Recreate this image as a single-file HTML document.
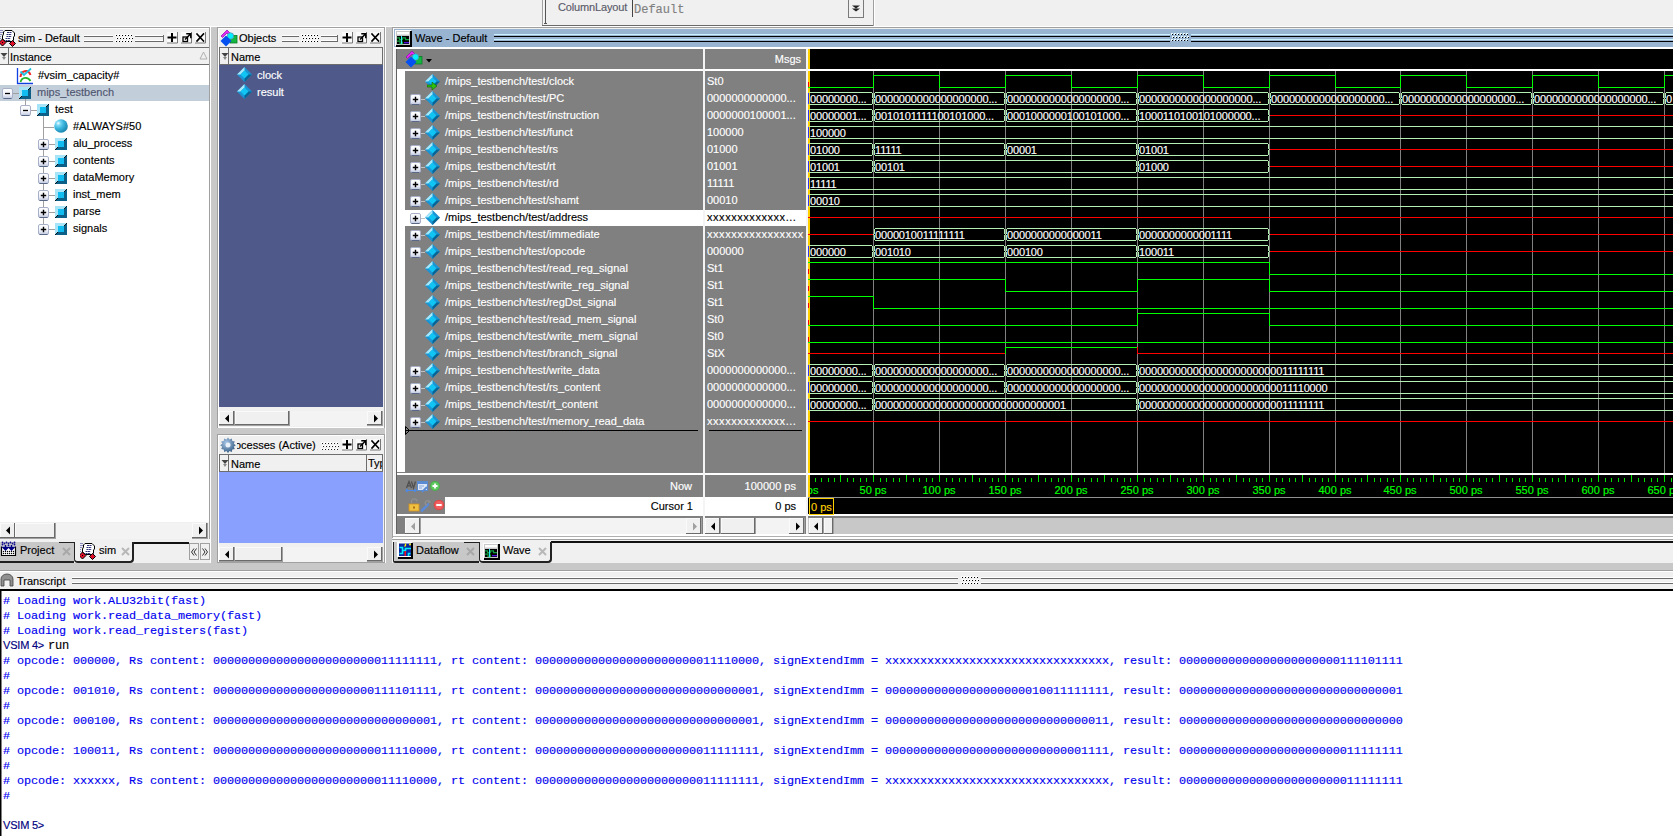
<!DOCTYPE html>
<html><head><meta charset="utf-8"><style>
html,body{margin:0;padding:0;}
body{width:1673px;height:836px;position:relative;overflow:hidden;background:#f0f0f0;font-family:"Liberation Sans", sans-serif;}
.a{position:absolute;}
.t{position:absolute;white-space:pre;line-height:14px;font-family:"Liberation Sans", sans-serif;-webkit-text-stroke:0.15px currentColor;}
</style></head><body>
<div class="a" style="left:0px;top:0px;width:1673px;height:27px;background:#f0f0f0;"></div>
<div class="a" style="left:542px;top:0px;width:1px;height:25px;background:#a0a0a0;"></div>
<div class="a" style="left:543px;top:0px;width:1px;height:25px;background:#f8f8f8;"></div>
<div class="a" style="left:542px;top:25px;width:332px;height:1px;background:#6a6a6a;"></div>
<div class="a" style="left:542px;top:26px;width:332px;height:1px;background:#fff;"></div>
<div class="a" style="left:873px;top:0px;width:1px;height:26px;background:#a0a0a0;"></div>
<div class="a" style="left:874px;top:0px;width:1px;height:27px;background:#fff;"></div>
<div class="a" style="left:545px;top:0px;width:1px;height:24px;background:#555;"></div>
<div class="a" style="left:544px;top:23px;width:3px;height:1px;background:#555;"></div>
<div class="t" style="left:558px;top:0px;color:#5a5a6a;font-size:11px;font-family:'Liberation Sans', sans-serif;letter-spacing:-0.15px;">ColumnLayout</div>
<div class="a" style="left:632px;top:0px;width:1px;height:17px;background:#444;"></div>
<div class="t" style="left:634px;top:3px;color:#808080;font-size:12px;font-family:'Liberation Mono', monospace;">Default</div>
<div class="a" style="left:848px;top:0px;width:16px;height:18px;background:#f0f0f0;border:1px solid #7a7a7a;border-top:none;box-sizing:border-box;"></div>
<svg class="a" style="left:851px;top:4px" width="10" height="10" viewBox="0 0 10 10"><path d="M1 1.5h8l-4 3z M1 4.5h8l-4 3z" fill="#222"/></svg>
<div class="a" style="left:0px;top:26px;width:1673px;height:1px;background:#fff;"></div>
<div class="a" style="left:0px;top:27px;width:1673px;height:1px;background:#a0a0a0;"></div>
<div class="a" style="left:0px;top:28px;width:210px;height:535px;background:#f0f0f0;"></div>
<div class="a" style="left:209px;top:27px;width:1px;height:512px;background:#a0a0a0;"></div>
<div class="a" style="left:0px;top:28px;width:209px;height:1px;background:#fff;"></div>
<svg class="a" style="left:0px;top:28px" width="17" height="19" viewBox="0 0 17 19"><path d="M5 2.5H12L14.5 5V8L13.5 9V12L12.5 13.5H5.5L2.5 11V8L3.5 6V4Z" fill="#fff" stroke="#000"/><path d="M7 4.5h5M6.5 6.5h5M6.5 8.5h5M5.5 10.5h5M5.5 12.5h5" stroke="#303078" stroke-dasharray="2 0.4"/><path d="M0 2.5h3M0 4.5h3M0 6.5h2M0 8.5h1M0 10.5h1" stroke="#8888c0"/><path d="M2.5 11L6 14.5L2.5 18L-1 14.5Z" fill="#e0102a" stroke="#000"/><rect x="2" y="14" width="1" height="1" fill="#000"/><path d="M12.5 12.5L15.5 15.5L12.5 18.5L9.5 15.5Z" fill="#e0102a" stroke="#000"/></svg>
<div class="t" style="left:18px;top:31px;color:#000;font-size:11px;font-family:'Liberation Sans', sans-serif;">sim - Default</div>
<div class="a" style="left:84px;top:35px;width:29px;height:1px;background:#fff;"></div>
<div class="a" style="left:84px;top:36px;width:29px;height:1px;background:#6a6a6a;"></div>
<div class="a" style="left:84px;top:40px;width:29px;height:1px;background:#fff;"></div>
<div class="a" style="left:84px;top:41px;width:29px;height:1px;background:#6a6a6a;"></div>
<svg class="a" style="left:115px;top:34px" width="18" height="9" shape-rendering="crispEdges"><rect x="0" y="0" width="2" height="1" fill="#fff"/><rect x="0" y="1" width="1" height="1" fill="#fff"/><rect x="1" y="1" width="1" height="1" fill="#000"/><rect x="3" y="0" width="2" height="1" fill="#fff"/><rect x="3" y="1" width="1" height="1" fill="#fff"/><rect x="4" y="1" width="1" height="1" fill="#000"/><rect x="6" y="0" width="2" height="1" fill="#fff"/><rect x="6" y="1" width="1" height="1" fill="#fff"/><rect x="7" y="1" width="1" height="1" fill="#000"/><rect x="9" y="0" width="2" height="1" fill="#fff"/><rect x="9" y="1" width="1" height="1" fill="#fff"/><rect x="10" y="1" width="1" height="1" fill="#000"/><rect x="12" y="0" width="2" height="1" fill="#fff"/><rect x="12" y="1" width="1" height="1" fill="#fff"/><rect x="13" y="1" width="1" height="1" fill="#000"/><rect x="15" y="0" width="2" height="1" fill="#fff"/><rect x="15" y="1" width="1" height="1" fill="#fff"/><rect x="16" y="1" width="1" height="1" fill="#000"/><rect x="1" y="3" width="2" height="1" fill="#fff"/><rect x="1" y="4" width="1" height="1" fill="#fff"/><rect x="2" y="4" width="1" height="1" fill="#000"/><rect x="4" y="3" width="2" height="1" fill="#fff"/><rect x="4" y="4" width="1" height="1" fill="#fff"/><rect x="5" y="4" width="1" height="1" fill="#000"/><rect x="7" y="3" width="2" height="1" fill="#fff"/><rect x="7" y="4" width="1" height="1" fill="#fff"/><rect x="8" y="4" width="1" height="1" fill="#000"/><rect x="10" y="3" width="2" height="1" fill="#fff"/><rect x="10" y="4" width="1" height="1" fill="#fff"/><rect x="11" y="4" width="1" height="1" fill="#000"/><rect x="13" y="3" width="2" height="1" fill="#fff"/><rect x="13" y="4" width="1" height="1" fill="#fff"/><rect x="14" y="4" width="1" height="1" fill="#000"/><rect x="16" y="3" width="2" height="1" fill="#fff"/><rect x="16" y="4" width="1" height="1" fill="#fff"/><rect x="17" y="4" width="1" height="1" fill="#000"/><rect x="0" y="6" width="2" height="1" fill="#fff"/><rect x="0" y="7" width="1" height="1" fill="#fff"/><rect x="1" y="7" width="1" height="1" fill="#000"/><rect x="3" y="6" width="2" height="1" fill="#fff"/><rect x="3" y="7" width="1" height="1" fill="#fff"/><rect x="4" y="7" width="1" height="1" fill="#000"/><rect x="6" y="6" width="2" height="1" fill="#fff"/><rect x="6" y="7" width="1" height="1" fill="#fff"/><rect x="7" y="7" width="1" height="1" fill="#000"/><rect x="9" y="6" width="2" height="1" fill="#fff"/><rect x="9" y="7" width="1" height="1" fill="#fff"/><rect x="10" y="7" width="1" height="1" fill="#000"/><rect x="12" y="6" width="2" height="1" fill="#fff"/><rect x="12" y="7" width="1" height="1" fill="#fff"/><rect x="13" y="7" width="1" height="1" fill="#000"/><rect x="15" y="6" width="2" height="1" fill="#fff"/><rect x="15" y="7" width="1" height="1" fill="#fff"/><rect x="16" y="7" width="1" height="1" fill="#000"/></svg>
<div class="a" style="left:135px;top:35px;width:29px;height:1px;background:#fff;"></div>
<div class="a" style="left:135px;top:36px;width:29px;height:1px;background:#6a6a6a;"></div>
<div class="a" style="left:135px;top:40px;width:29px;height:1px;background:#fff;"></div>
<div class="a" style="left:135px;top:41px;width:29px;height:1px;background:#6a6a6a;"></div>
<div class="a" style="left:163px;top:35px;width:1px;height:7px;background:#6a6a6a;"></div>
<svg class="a" style="left:167px;top:32px" width="40" height="12" viewBox="0 0 40 12"><g stroke-linecap="square"><rect x="0" y="0" width="11" height="11" fill="#fafafa"/><path d="M10.5 0.5V11H0.5" stroke="#777" fill="none"/><path d="M5 2v7M1.5 5.5h7" stroke="#000" stroke-width="2"/><rect x="14" y="0" width="11" height="11" fill="#fafafa"/><path d="M24.5 0.5V11H14.5" stroke="#777" fill="none"/><rect x="16" y="5" width="4.5" height="4.5" fill="none" stroke="#000" stroke-width="1.3"/><path d="M18.5 7l5-5M20 1.8h3.8v3.8" stroke="#000" stroke-width="1.5" fill="none"/><rect x="28" y="0" width="11" height="11" fill="#fafafa"/><path d="M38.5 0.5V11H28.5" stroke="#777" fill="none"/><path d="M30 2l6.5 7M36.5 2l-6.5 7" stroke="#000" stroke-width="1.6"/></g></svg>
<div class="a" style="left:0px;top:47px;width:209px;height:1px;background:#6d6d6d;"></div>
<div class="a" style="left:0px;top:48px;width:209px;height:16px;background:#f0f0f0;"></div>
<div class="a" style="left:0px;top:64px;width:209px;height:1px;background:#6d6d6d;"></div>
<div class="a" style="left:8px;top:48px;width:1px;height:16px;background:#6d6d6d;"></div>
<svg class="a" style="left:0px;top:52px" width="8" height="9" viewBox="0 0 8 9"><path d="M0.5 1h7l-3.5 4z" fill="#444"/><path d="M2 5h4l-2 3z" fill="#888"/></svg>
<div class="t" style="left:10px;top:50px;color:#000;font-size:11px;font-family:'Liberation Sans', sans-serif;">Instance</div>
<svg class="a" style="left:199px;top:51px" width="9" height="9" viewBox="0 0 9 9"><path d="M4.5 1L8 8H1z" fill="none" stroke="#b0b0b0"/></svg>
<div class="a" style="left:0px;top:65px;width:209px;height:457px;background:#fff;"></div>
<div class="a" style="left:0px;top:85px;width:209px;height:16px;background:#c3cedb;"></div>
<svg class="a" style="left:16px;top:67px" width="18" height="18" viewBox="0 0 18 18"><path d="M1.5 1v15.5H17" stroke="#1040e0" stroke-width="1.3" fill="none"/><path d="M4.5 10C5 4 12 1.5 14.5 8" stroke="#f02828" stroke-width="2" fill="none"/><path d="M4.5 15C6 10 12 9.5 14.5 14" stroke="#28b428" stroke-width="1.8" fill="none"/><path d="M4.5 4.5l3.5 3.5 7-6.5" stroke="#20c0e0" stroke-width="1.8" fill="none"/></svg>
<div class="t" style="left:38px;top:68px;color:#000;font-size:11px;font-family:'Liberation Sans', sans-serif;">#vsim_capacity#</div>
<div class="a" style="left:25px;top:98px;width:1px;height:8px;background:#a0a0a0;"></div>
<div class="a" style="left:12px;top:93px;width:7px;height:1px;background:#a0a0a0;"></div>
<div class="a" style="left:43px;top:112px;width:1px;height:119px;background:#a0a0a0;"></div>
<div class="a" style="left:30px;top:110px;width:7px;height:1px;background:#a0a0a0;"></div>
<svg class="a" style="left:2px;top:88px" width="11" height="11" viewBox="0 0 11 11"><defs><linearGradient id="pg" x1="0" y1="0" x2="0" y2="1"><stop offset="0" stop-color="#fff"/><stop offset="0.6" stop-color="#f0f2fa"/><stop offset="1" stop-color="#c0c8e0"/></linearGradient></defs><rect x="0.5" y="0.5" width="10" height="10" rx="1.5" fill="url(#pg)" stroke="#a8b0c8"/><path d="M1.5 10.5h8" stroke="#5a6888"/><path d="M3 5.5h5" stroke="#000" stroke-width="1.3"/></svg>
<svg class="a" style="left:19px;top:87px" width="12" height="12" viewBox="0 0 12 12"><rect width="12" height="12" fill="#0c6088"/><path d="M0 0H12L0 12Z" fill="#a8e4f8"/><path d="M12 0L0 12" stroke="#000" stroke-width="0.9"/><rect x="3" y="3" width="6" height="6" fill="#10bcf0"/></svg>
<div class="t" style="left:37px;top:85px;color:#4f5670;font-size:11px;font-family:'Liberation Sans', sans-serif;">mips_testbench</div>
<svg class="a" style="left:20px;top:105px" width="11" height="11" viewBox="0 0 11 11"><defs><linearGradient id="pg" x1="0" y1="0" x2="0" y2="1"><stop offset="0" stop-color="#fff"/><stop offset="0.6" stop-color="#f0f2fa"/><stop offset="1" stop-color="#c0c8e0"/></linearGradient></defs><rect x="0.5" y="0.5" width="10" height="10" rx="1.5" fill="url(#pg)" stroke="#a8b0c8"/><path d="M1.5 10.5h8" stroke="#5a6888"/><path d="M3 5.5h5" stroke="#000" stroke-width="1.3"/></svg>
<svg class="a" style="left:37px;top:104px" width="12" height="12" viewBox="0 0 12 12"><rect width="12" height="12" fill="#0c6088"/><path d="M0 0H12L0 12Z" fill="#a8e4f8"/><path d="M12 0L0 12" stroke="#000" stroke-width="0.9"/><rect x="3" y="3" width="6" height="6" fill="#10bcf0"/></svg>
<div class="t" style="left:55px;top:102px;color:#000;font-size:11px;font-family:'Liberation Sans', sans-serif;">test</div>
<div class="a" style="left:44px;top:127px;width:10px;height:1px;background:#a0a0a0;"></div>
<svg class="a" style="left:54px;top:119px" width="14" height="14" viewBox="0 0 14 14"><defs><radialGradient id="sg" cx="0.3" cy="0.3" r="0.8"><stop offset="0" stop-color="#f0fcff"/><stop offset="0.2" stop-color="#7ad8f4"/><stop offset="0.5" stop-color="#38b4dc"/><stop offset="1" stop-color="#1680a8"/></radialGradient></defs><circle cx="7" cy="7" r="6.8" fill="url(#sg)"/></svg>
<div class="t" style="left:73px;top:119px;color:#000;font-size:11px;font-family:'Liberation Sans', sans-serif;">#ALWAYS#50</div>
<div class="a" style="left:49px;top:144px;width:6px;height:1px;background:#a0a0a0;"></div>
<svg class="a" style="left:38px;top:139px" width="11" height="11" viewBox="0 0 11 11"><defs><linearGradient id="pg" x1="0" y1="0" x2="0" y2="1"><stop offset="0" stop-color="#fff"/><stop offset="0.6" stop-color="#f0f2fa"/><stop offset="1" stop-color="#c0c8e0"/></linearGradient></defs><rect x="0.5" y="0.5" width="10" height="10" rx="1.5" fill="url(#pg)" stroke="#a8b0c8"/><path d="M1.5 10.5h8" stroke="#5a6888"/><path d="M2.8 5.5h5.4M5.5 2.8v5.4" stroke="#000" stroke-width="1.4"/></svg>
<svg class="a" style="left:55px;top:138px" width="12" height="12" viewBox="0 0 12 12"><rect width="12" height="12" fill="#0c6088"/><path d="M0 0H12L0 12Z" fill="#a8e4f8"/><path d="M12 0L0 12" stroke="#000" stroke-width="0.9"/><rect x="3" y="3" width="6" height="6" fill="#10bcf0"/></svg>
<div class="t" style="left:73px;top:136px;color:#000;font-size:11px;font-family:'Liberation Sans', sans-serif;">alu_process</div>
<div class="a" style="left:49px;top:161px;width:6px;height:1px;background:#a0a0a0;"></div>
<svg class="a" style="left:38px;top:156px" width="11" height="11" viewBox="0 0 11 11"><defs><linearGradient id="pg" x1="0" y1="0" x2="0" y2="1"><stop offset="0" stop-color="#fff"/><stop offset="0.6" stop-color="#f0f2fa"/><stop offset="1" stop-color="#c0c8e0"/></linearGradient></defs><rect x="0.5" y="0.5" width="10" height="10" rx="1.5" fill="url(#pg)" stroke="#a8b0c8"/><path d="M1.5 10.5h8" stroke="#5a6888"/><path d="M2.8 5.5h5.4M5.5 2.8v5.4" stroke="#000" stroke-width="1.4"/></svg>
<svg class="a" style="left:55px;top:155px" width="12" height="12" viewBox="0 0 12 12"><rect width="12" height="12" fill="#0c6088"/><path d="M0 0H12L0 12Z" fill="#a8e4f8"/><path d="M12 0L0 12" stroke="#000" stroke-width="0.9"/><rect x="3" y="3" width="6" height="6" fill="#10bcf0"/></svg>
<div class="t" style="left:73px;top:153px;color:#000;font-size:11px;font-family:'Liberation Sans', sans-serif;">contents</div>
<div class="a" style="left:49px;top:178px;width:6px;height:1px;background:#a0a0a0;"></div>
<svg class="a" style="left:38px;top:173px" width="11" height="11" viewBox="0 0 11 11"><defs><linearGradient id="pg" x1="0" y1="0" x2="0" y2="1"><stop offset="0" stop-color="#fff"/><stop offset="0.6" stop-color="#f0f2fa"/><stop offset="1" stop-color="#c0c8e0"/></linearGradient></defs><rect x="0.5" y="0.5" width="10" height="10" rx="1.5" fill="url(#pg)" stroke="#a8b0c8"/><path d="M1.5 10.5h8" stroke="#5a6888"/><path d="M2.8 5.5h5.4M5.5 2.8v5.4" stroke="#000" stroke-width="1.4"/></svg>
<svg class="a" style="left:55px;top:172px" width="12" height="12" viewBox="0 0 12 12"><rect width="12" height="12" fill="#0c6088"/><path d="M0 0H12L0 12Z" fill="#a8e4f8"/><path d="M12 0L0 12" stroke="#000" stroke-width="0.9"/><rect x="3" y="3" width="6" height="6" fill="#10bcf0"/></svg>
<div class="t" style="left:73px;top:170px;color:#000;font-size:11px;font-family:'Liberation Sans', sans-serif;">dataMemory</div>
<div class="a" style="left:49px;top:195px;width:6px;height:1px;background:#a0a0a0;"></div>
<svg class="a" style="left:38px;top:190px" width="11" height="11" viewBox="0 0 11 11"><defs><linearGradient id="pg" x1="0" y1="0" x2="0" y2="1"><stop offset="0" stop-color="#fff"/><stop offset="0.6" stop-color="#f0f2fa"/><stop offset="1" stop-color="#c0c8e0"/></linearGradient></defs><rect x="0.5" y="0.5" width="10" height="10" rx="1.5" fill="url(#pg)" stroke="#a8b0c8"/><path d="M1.5 10.5h8" stroke="#5a6888"/><path d="M2.8 5.5h5.4M5.5 2.8v5.4" stroke="#000" stroke-width="1.4"/></svg>
<svg class="a" style="left:55px;top:189px" width="12" height="12" viewBox="0 0 12 12"><rect width="12" height="12" fill="#0c6088"/><path d="M0 0H12L0 12Z" fill="#a8e4f8"/><path d="M12 0L0 12" stroke="#000" stroke-width="0.9"/><rect x="3" y="3" width="6" height="6" fill="#10bcf0"/></svg>
<div class="t" style="left:73px;top:187px;color:#000;font-size:11px;font-family:'Liberation Sans', sans-serif;">inst_mem</div>
<div class="a" style="left:49px;top:212px;width:6px;height:1px;background:#a0a0a0;"></div>
<svg class="a" style="left:38px;top:207px" width="11" height="11" viewBox="0 0 11 11"><defs><linearGradient id="pg" x1="0" y1="0" x2="0" y2="1"><stop offset="0" stop-color="#fff"/><stop offset="0.6" stop-color="#f0f2fa"/><stop offset="1" stop-color="#c0c8e0"/></linearGradient></defs><rect x="0.5" y="0.5" width="10" height="10" rx="1.5" fill="url(#pg)" stroke="#a8b0c8"/><path d="M1.5 10.5h8" stroke="#5a6888"/><path d="M2.8 5.5h5.4M5.5 2.8v5.4" stroke="#000" stroke-width="1.4"/></svg>
<svg class="a" style="left:55px;top:206px" width="12" height="12" viewBox="0 0 12 12"><rect width="12" height="12" fill="#0c6088"/><path d="M0 0H12L0 12Z" fill="#a8e4f8"/><path d="M12 0L0 12" stroke="#000" stroke-width="0.9"/><rect x="3" y="3" width="6" height="6" fill="#10bcf0"/></svg>
<div class="t" style="left:73px;top:204px;color:#000;font-size:11px;font-family:'Liberation Sans', sans-serif;">parse</div>
<div class="a" style="left:49px;top:229px;width:6px;height:1px;background:#a0a0a0;"></div>
<svg class="a" style="left:38px;top:224px" width="11" height="11" viewBox="0 0 11 11"><defs><linearGradient id="pg" x1="0" y1="0" x2="0" y2="1"><stop offset="0" stop-color="#fff"/><stop offset="0.6" stop-color="#f0f2fa"/><stop offset="1" stop-color="#c0c8e0"/></linearGradient></defs><rect x="0.5" y="0.5" width="10" height="10" rx="1.5" fill="url(#pg)" stroke="#a8b0c8"/><path d="M1.5 10.5h8" stroke="#5a6888"/><path d="M2.8 5.5h5.4M5.5 2.8v5.4" stroke="#000" stroke-width="1.4"/></svg>
<svg class="a" style="left:55px;top:223px" width="12" height="12" viewBox="0 0 12 12"><rect width="12" height="12" fill="#0c6088"/><path d="M0 0H12L0 12Z" fill="#a8e4f8"/><path d="M12 0L0 12" stroke="#000" stroke-width="0.9"/><rect x="3" y="3" width="6" height="6" fill="#10bcf0"/></svg>
<div class="t" style="left:73px;top:221px;color:#000;font-size:11px;font-family:'Liberation Sans', sans-serif;">signals</div>
<div class="a" style="left:0px;top:522px;width:209px;height:1px;background:#f0f0f0;"></div>
<div class="a" style="left:0px;top:523px;width:208px;height:16px;background:#f3f3f3;"></div>
<div class="a" style="left:0px;top:523px;width:16px;height:16px;background:#f0f0f0;box-shadow: inset -1px -1px 0 #a0a0a0, inset -2px -2px 0 #6a6a6a, inset 1px 1px 0 #fafafa;"></div>
<svg class="a" style="left:5px;top:526px" width="6" height="9" viewBox="0 0 6 9"><path d="M5 0.5v8L1 4.5z" fill="#000"/></svg>
<div class="a" style="left:15px;top:523px;width:41px;height:16px;background:#f0f0f0;box-shadow: inset -1px -1px 0 #a0a0a0, inset -2px -2px 0 #6a6a6a, inset 1px 1px 0 #fafafa;"></div>
<div class="a" style="left:192px;top:523px;width:16px;height:16px;background:#f0f0f0;box-shadow: inset -1px -1px 0 #a0a0a0, inset -2px -2px 0 #6a6a6a, inset 1px 1px 0 #fafafa;"></div>
<svg class="a" style="left:198px;top:526px" width="6" height="9" viewBox="0 0 6 9"><path d="M1 0.5v8L5 4.5z" fill="#000"/></svg>
<div class="a" style="left:0px;top:539px;width:210px;height:3px;background:#f0f0f0;"></div>
<div class="a" style="left:0px;top:542px;width:74px;height:20px;background:#c8c8c8;"></div>
<div class="a" style="left:59px;top:542px;width:15px;height:1px;background:#222;"></div>
<div class="a" style="left:0px;top:561px;width:74px;height:2px;background:#222;"></div>
<div class="a" style="left:74px;top:542px;width:60px;height:21px;background:#f0f0f0;border:1px solid #222;border-top:none;border-width:0 2px 2px 1px;box-sizing:border-box;border-radius:0 0 4px 4px;"></div>
<div class="a" style="left:134px;top:542px;width:55px;height:21px;background:#f0f0f0;border-top:2px solid #111;box-sizing:border-box;"></div>
<svg class="a" style="left:0px;top:540px" width="17" height="17" viewBox="0 0 17 17"><g fill="#101090"><circle cx="2.5" cy="2.5" r="0.9"/><circle cx="6.5" cy="2.5" r="0.9"/><circle cx="10.5" cy="2.5" r="0.9"/><circle cx="14.5" cy="2.5" r="0.9"/><circle cx="4.5" cy="3.5" r="0.9"/><circle cx="8.5" cy="3.5" r="0.9"/><circle cx="12.5" cy="3.5" r="0.9"/><circle cx="2.5" cy="4.5" r="0.9"/><circle cx="14.5" cy="4.5" r="0.9"/><circle cx="8.5" cy="5.5" r="0.9"/></g><path d="M1.5 6.5V15.5H15.5V6.5" stroke="#000" stroke-width="1.2" fill="#fff"/><path d="M5.5 5v3M3 7.5h5l-2.5 2.5zM11.5 5v3M9 7.5h5l-2.5 2.5z" stroke="#000080" fill="#000080" stroke-width="1.4"/><g fill="#000"><circle cx="3.5" cy="11.5" r="0.7"/><circle cx="5.5" cy="11.5" r="0.7"/><circle cx="7.5" cy="11.5" r="0.7"/><circle cx="9.5" cy="11.5" r="0.7"/><circle cx="11.5" cy="11.5" r="0.7"/><circle cx="13.5" cy="11.5" r="0.7"/><circle cx="3.5" cy="13.5" r="0.7"/><circle cx="5.5" cy="13.5" r="0.7"/><circle cx="7.5" cy="13.5" r="0.7"/><circle cx="9.5" cy="13.5" r="0.7"/><circle cx="11.5" cy="13.5" r="0.7"/><circle cx="13.5" cy="13.5" r="0.7"/></g></svg>
<div class="t" style="left:20px;top:543px;color:#000;font-size:11px;font-family:'Liberation Sans', sans-serif;">Project</div>
<svg class="a" style="left:62px;top:547px" width="9" height="9" viewBox="0 0 9 9"><path d="M1 1l7 7M8 1l-7 7" stroke="#a8a8a8" stroke-width="2"/></svg>
<svg class="a" style="left:80px;top:541px" width="17" height="19" viewBox="0 0 17 19"><path d="M5 2.5H12L14.5 5V8L13.5 9V12L12.5 13.5H5.5L2.5 11V8L3.5 6V4Z" fill="#fff" stroke="#000"/><path d="M7 4.5h5M6.5 6.5h5M6.5 8.5h5M5.5 10.5h5M5.5 12.5h5" stroke="#303078" stroke-dasharray="2 0.4"/><path d="M0 2.5h3M0 4.5h3M0 6.5h2M0 8.5h1M0 10.5h1" stroke="#8888c0"/><path d="M2.5 11L6 14.5L2.5 18L-1 14.5Z" fill="#e0102a" stroke="#000"/><rect x="2" y="14" width="1" height="1" fill="#000"/><path d="M12.5 12.5L15.5 15.5L12.5 18.5L9.5 15.5Z" fill="#e0102a" stroke="#000"/></svg>
<div class="t" style="left:99px;top:543px;color:#000;font-size:11px;font-family:'Liberation Sans', sans-serif;">sim</div>
<svg class="a" style="left:121px;top:547px" width="9" height="9" viewBox="0 0 9 9"><path d="M1 1l7 7M8 1l-7 7" stroke="#b8b8b8" stroke-width="2"/></svg>
<div class="a" style="left:189px;top:543px;width:10px;height:17px;background:#f0f0f0;border:1px solid #a0a0a0;box-sizing:border-box;"></div>
<div class="a" style="left:200px;top:543px;width:10px;height:17px;background:#f0f0f0;border:1px solid #a0a0a0;box-sizing:border-box;"></div>
<svg class="a" style="left:191px;top:548px" width="6" height="8" viewBox="0 0 6 8"><path d="M3 0.5L0.5 4L3 7.5M5.5 0.5L3 4L5.5 7.5" stroke="#333" fill="none"/></svg>
<svg class="a" style="left:202px;top:548px" width="6" height="8" viewBox="0 0 6 8"><path d="M0.5 0.5L3 4L0.5 7.5M3 0.5L5.5 4L3 7.5" stroke="#333" fill="none"/></svg>
<div class="a" style="left:0px;top:563px;width:1673px;height:7px;background:#c8c8c8;"></div>
<div class="a" style="left:0px;top:570px;width:1673px;height:1px;background:#a0a0a0;"></div>
<div class="a" style="left:0px;top:571px;width:1673px;height:1px;background:#fff;"></div>
<div class="a" style="left:210px;top:27px;width:7px;height:536px;background:#c8c8c8;"></div>
<div class="a" style="left:210px;top:27px;width:1px;height:536px;background:#fff;"></div>
<div class="a" style="left:217px;top:27px;width:168px;height:401px;background:#f0f0f0;border:1px solid #a0a0a0;box-sizing:border-box;"></div>
<div class="a" style="left:218px;top:28px;width:166px;height:1px;background:#fff;"></div>
<div class="a" style="left:218px;top:28px;width:1px;height:399px;background:#fff;"></div>
<svg class="a" style="left:219px;top:28px" width="20" height="20" viewBox="0 0 20 20"><path d="M2 8L8 2L11.5 5.5L10 7L8 5L3.5 9.5Z" fill="#e428f4" stroke="#8a10a8" stroke-width="0.7"/><rect x="11" y="7.5" width="7" height="7.5" fill="#14b840" stroke="#0a7a28" stroke-width="0.8"/><circle cx="11.5" cy="8" r="3.2" fill="#00f0ff" stroke="#5a90b0" stroke-width="0.8"/><path d="M1.5 13L7 7.5L12.5 13L7 18.5Z" fill="#0450f0"/></svg>
<div class="t" style="left:239px;top:31px;color:#000;font-size:11px;font-family:'Liberation Sans', sans-serif;">Objects</div>
<div class="a" style="left:282px;top:35px;width:17px;height:1px;background:#fff;"></div>
<div class="a" style="left:282px;top:36px;width:17px;height:1px;background:#6a6a6a;"></div>
<div class="a" style="left:282px;top:40px;width:17px;height:1px;background:#fff;"></div>
<div class="a" style="left:282px;top:41px;width:17px;height:1px;background:#6a6a6a;"></div>
<svg class="a" style="left:301px;top:34px" width="18" height="9" shape-rendering="crispEdges"><rect x="0" y="0" width="2" height="1" fill="#fff"/><rect x="0" y="1" width="1" height="1" fill="#fff"/><rect x="1" y="1" width="1" height="1" fill="#000"/><rect x="3" y="0" width="2" height="1" fill="#fff"/><rect x="3" y="1" width="1" height="1" fill="#fff"/><rect x="4" y="1" width="1" height="1" fill="#000"/><rect x="6" y="0" width="2" height="1" fill="#fff"/><rect x="6" y="1" width="1" height="1" fill="#fff"/><rect x="7" y="1" width="1" height="1" fill="#000"/><rect x="9" y="0" width="2" height="1" fill="#fff"/><rect x="9" y="1" width="1" height="1" fill="#fff"/><rect x="10" y="1" width="1" height="1" fill="#000"/><rect x="12" y="0" width="2" height="1" fill="#fff"/><rect x="12" y="1" width="1" height="1" fill="#fff"/><rect x="13" y="1" width="1" height="1" fill="#000"/><rect x="15" y="0" width="2" height="1" fill="#fff"/><rect x="15" y="1" width="1" height="1" fill="#fff"/><rect x="16" y="1" width="1" height="1" fill="#000"/><rect x="1" y="3" width="2" height="1" fill="#fff"/><rect x="1" y="4" width="1" height="1" fill="#fff"/><rect x="2" y="4" width="1" height="1" fill="#000"/><rect x="4" y="3" width="2" height="1" fill="#fff"/><rect x="4" y="4" width="1" height="1" fill="#fff"/><rect x="5" y="4" width="1" height="1" fill="#000"/><rect x="7" y="3" width="2" height="1" fill="#fff"/><rect x="7" y="4" width="1" height="1" fill="#fff"/><rect x="8" y="4" width="1" height="1" fill="#000"/><rect x="10" y="3" width="2" height="1" fill="#fff"/><rect x="10" y="4" width="1" height="1" fill="#fff"/><rect x="11" y="4" width="1" height="1" fill="#000"/><rect x="13" y="3" width="2" height="1" fill="#fff"/><rect x="13" y="4" width="1" height="1" fill="#fff"/><rect x="14" y="4" width="1" height="1" fill="#000"/><rect x="16" y="3" width="2" height="1" fill="#fff"/><rect x="16" y="4" width="1" height="1" fill="#fff"/><rect x="17" y="4" width="1" height="1" fill="#000"/><rect x="0" y="6" width="2" height="1" fill="#fff"/><rect x="0" y="7" width="1" height="1" fill="#fff"/><rect x="1" y="7" width="1" height="1" fill="#000"/><rect x="3" y="6" width="2" height="1" fill="#fff"/><rect x="3" y="7" width="1" height="1" fill="#fff"/><rect x="4" y="7" width="1" height="1" fill="#000"/><rect x="6" y="6" width="2" height="1" fill="#fff"/><rect x="6" y="7" width="1" height="1" fill="#fff"/><rect x="7" y="7" width="1" height="1" fill="#000"/><rect x="9" y="6" width="2" height="1" fill="#fff"/><rect x="9" y="7" width="1" height="1" fill="#fff"/><rect x="10" y="7" width="1" height="1" fill="#000"/><rect x="12" y="6" width="2" height="1" fill="#fff"/><rect x="12" y="7" width="1" height="1" fill="#fff"/><rect x="13" y="7" width="1" height="1" fill="#000"/><rect x="15" y="6" width="2" height="1" fill="#fff"/><rect x="15" y="7" width="1" height="1" fill="#fff"/><rect x="16" y="7" width="1" height="1" fill="#000"/></svg>
<div class="a" style="left:321px;top:35px;width:17px;height:1px;background:#fff;"></div>
<div class="a" style="left:321px;top:36px;width:17px;height:1px;background:#6a6a6a;"></div>
<div class="a" style="left:321px;top:40px;width:17px;height:1px;background:#fff;"></div>
<div class="a" style="left:321px;top:41px;width:17px;height:1px;background:#6a6a6a;"></div>
<div class="a" style="left:337px;top:35px;width:1px;height:7px;background:#6a6a6a;"></div>
<svg class="a" style="left:342px;top:32px" width="40" height="12" viewBox="0 0 40 12"><g stroke-linecap="square"><rect x="0" y="0" width="11" height="11" fill="#fafafa"/><path d="M10.5 0.5V11H0.5" stroke="#777" fill="none"/><path d="M5 2v7M1.5 5.5h7" stroke="#000" stroke-width="2"/><rect x="14" y="0" width="11" height="11" fill="#fafafa"/><path d="M24.5 0.5V11H14.5" stroke="#777" fill="none"/><rect x="16" y="5" width="4.5" height="4.5" fill="none" stroke="#000" stroke-width="1.3"/><path d="M18.5 7l5-5M20 1.8h3.8v3.8" stroke="#000" stroke-width="1.5" fill="none"/><rect x="28" y="0" width="11" height="11" fill="#fafafa"/><path d="M38.5 0.5V11H28.5" stroke="#777" fill="none"/><path d="M30 2l6.5 7M36.5 2l-6.5 7" stroke="#000" stroke-width="1.6"/></g></svg>
<div class="a" style="left:219px;top:47px;width:164px;height:18px;background:#f0f0f0;border:1px solid #6d6d6d;border-left:1px solid #6d6d6d;box-sizing:border-box;"></div>
<div class="a" style="left:228px;top:48px;width:1px;height:16px;background:#6d6d6d;"></div>
<svg class="a" style="left:221px;top:52px" width="8" height="9" viewBox="0 0 8 9"><path d="M0.5 1h7l-3.5 4z" fill="#444"/><path d="M2 5h4l-2 3z" fill="#888"/></svg>
<div class="t" style="left:231px;top:50px;color:#000;font-size:11px;font-family:'Liberation Sans', sans-serif;">Name</div>
<div class="a" style="left:219px;top:65px;width:164px;height:342px;background:#4f5a8a;"></div>
<div class="a" style="left:219px;top:407px;width:164px;height:4px;background:#f0f0f0;"></div>
<svg class="a" style="left:237px;top:67px" width="15" height="15" viewBox="0 0 15 15"><path d="M7.5 0L15 7.5L7.5 15L0 7.5Z" fill="#1a94d4"/><path d="M7.5 0L0 7.5L3.5 7.5L7.5 3.5Z" fill="#a8e8fa"/><path d="M15 7.5L7.5 15L7.5 11L11 7.5Z" fill="#086494"/><path d="M7.5 3.5L11.5 7.5L7.5 11.5L3.5 7.5Z" fill="#10c4f4"/></svg>
<div class="t" style="left:257px;top:68px;color:#fff;font-size:11px;font-family:'Liberation Sans', sans-serif;">clock</div>
<svg class="a" style="left:237px;top:84px" width="15" height="15" viewBox="0 0 15 15"><path d="M7.5 0L15 7.5L7.5 15L0 7.5Z" fill="#1a94d4"/><path d="M7.5 0L0 7.5L3.5 7.5L7.5 3.5Z" fill="#a8e8fa"/><path d="M15 7.5L7.5 15L7.5 11L11 7.5Z" fill="#086494"/><path d="M7.5 3.5L11.5 7.5L7.5 11.5L3.5 7.5Z" fill="#10c4f4"/></svg>
<div class="t" style="left:257px;top:85px;color:#fff;font-size:11px;font-family:'Liberation Sans', sans-serif;">result</div>
<div class="a" style="left:219px;top:411px;width:164px;height:15px;background:#f3f3f3;"></div>
<div class="a" style="left:219px;top:411px;width:16px;height:15px;background:#f0f0f0;box-shadow: inset -1px -1px 0 #a0a0a0, inset -2px -2px 0 #6a6a6a, inset 1px 1px 0 #fafafa;"></div>
<svg class="a" style="left:224px;top:414px" width="6" height="9" viewBox="0 0 6 9"><path d="M5 0.5v8L1 4.5z" fill="#000"/></svg>
<div class="a" style="left:235px;top:411px;width:55px;height:15px;background:#f0f0f0;box-shadow: inset -1px -1px 0 #a0a0a0, inset -2px -2px 0 #6a6a6a, inset 1px 1px 0 #fafafa;"></div>
<div class="a" style="left:367px;top:411px;width:16px;height:15px;background:#f0f0f0;box-shadow: inset -1px -1px 0 #a0a0a0, inset -2px -2px 0 #6a6a6a, inset 1px 1px 0 #fafafa;"></div>
<svg class="a" style="left:373px;top:414px" width="6" height="9" viewBox="0 0 6 9"><path d="M1 0.5v8L5 4.5z" fill="#000"/></svg>
<div class="a" style="left:218px;top:427px;width:166px;height:1px;background:#fff;"></div>
<div class="a" style="left:217px;top:428px;width:168px;height:6px;background:#c8c8c8;"></div>
<div class="a" style="left:217px;top:434px;width:168px;height:129px;background:#f0f0f0;border:1px solid #a0a0a0;box-sizing:border-box;"></div>
<div class="a" style="left:218px;top:435px;width:166px;height:1px;background:#fff;"></div>
<div class="a" style="left:218px;top:435px;width:1px;height:127px;background:#fff;"></div>
<svg class="a" style="left:220px;top:437px" width="16" height="16" viewBox="0 0 16 16"><defs><radialGradient id="gg" cx="0.4" cy="0.35" r="0.7"><stop offset="0" stop-color="#a8c8e8"/><stop offset="1" stop-color="#305880"/></radialGradient></defs><path d="M8 0.5l1.5 2 2.3-1 0.5 2.5 2.5 0.5-1 2.3 2 1.5-2 1.5 1 2.3-2.5 0.5-0.5 2.5-2.3-1-1.5 2-1.5-2-2.3 1-0.5-2.5-2.5-0.5 1-2.3-2-1.5 2-1.5-1-2.3 2.5-0.5 0.5-2.5 2.3 1z" fill="url(#gg)"/><circle cx="8" cy="8" r="2.5" fill="#e8f0f8"/></svg>
<div class="t" style="left:237px;top:438px;width:82px;overflow:hidden;font-size:11px;"><span style="position:relative;left:-13px">Processes (Active)</span></div>
<div class="t" style="left:237px;top:437px;color:#000;font-size:11px;font-family:'Liberation Sans', sans-serif;"></div>
<svg class="a" style="left:321px;top:442px" width="18" height="8" shape-rendering="crispEdges"><rect x="0" y="0" width="2" height="1" fill="#fff"/><rect x="0" y="1" width="1" height="1" fill="#fff"/><rect x="1" y="1" width="1" height="1" fill="#222"/><rect x="3" y="0" width="2" height="1" fill="#fff"/><rect x="3" y="1" width="1" height="1" fill="#fff"/><rect x="4" y="1" width="1" height="1" fill="#222"/><rect x="6" y="0" width="2" height="1" fill="#fff"/><rect x="6" y="1" width="1" height="1" fill="#fff"/><rect x="7" y="1" width="1" height="1" fill="#222"/><rect x="9" y="0" width="2" height="1" fill="#fff"/><rect x="9" y="1" width="1" height="1" fill="#fff"/><rect x="10" y="1" width="1" height="1" fill="#222"/><rect x="12" y="0" width="2" height="1" fill="#fff"/><rect x="12" y="1" width="1" height="1" fill="#fff"/><rect x="13" y="1" width="1" height="1" fill="#222"/><rect x="15" y="0" width="2" height="1" fill="#fff"/><rect x="15" y="1" width="1" height="1" fill="#fff"/><rect x="16" y="1" width="1" height="1" fill="#222"/><rect x="1" y="3" width="2" height="1" fill="#fff"/><rect x="1" y="4" width="1" height="1" fill="#fff"/><rect x="2" y="4" width="1" height="1" fill="#222"/><rect x="4" y="3" width="2" height="1" fill="#fff"/><rect x="4" y="4" width="1" height="1" fill="#fff"/><rect x="5" y="4" width="1" height="1" fill="#222"/><rect x="7" y="3" width="2" height="1" fill="#fff"/><rect x="7" y="4" width="1" height="1" fill="#fff"/><rect x="8" y="4" width="1" height="1" fill="#222"/><rect x="10" y="3" width="2" height="1" fill="#fff"/><rect x="10" y="4" width="1" height="1" fill="#fff"/><rect x="11" y="4" width="1" height="1" fill="#222"/><rect x="13" y="3" width="2" height="1" fill="#fff"/><rect x="13" y="4" width="1" height="1" fill="#fff"/><rect x="14" y="4" width="1" height="1" fill="#222"/><rect x="16" y="3" width="2" height="1" fill="#fff"/><rect x="16" y="4" width="1" height="1" fill="#fff"/><rect x="17" y="4" width="1" height="1" fill="#222"/><rect x="0" y="6" width="2" height="1" fill="#fff"/><rect x="0" y="7" width="1" height="1" fill="#fff"/><rect x="1" y="7" width="1" height="1" fill="#222"/><rect x="3" y="6" width="2" height="1" fill="#fff"/><rect x="3" y="7" width="1" height="1" fill="#fff"/><rect x="4" y="7" width="1" height="1" fill="#222"/><rect x="6" y="6" width="2" height="1" fill="#fff"/><rect x="6" y="7" width="1" height="1" fill="#fff"/><rect x="7" y="7" width="1" height="1" fill="#222"/><rect x="9" y="6" width="2" height="1" fill="#fff"/><rect x="9" y="7" width="1" height="1" fill="#fff"/><rect x="10" y="7" width="1" height="1" fill="#222"/><rect x="12" y="6" width="2" height="1" fill="#fff"/><rect x="12" y="7" width="1" height="1" fill="#fff"/><rect x="13" y="7" width="1" height="1" fill="#222"/><rect x="15" y="6" width="2" height="1" fill="#fff"/><rect x="15" y="7" width="1" height="1" fill="#fff"/><rect x="16" y="7" width="1" height="1" fill="#222"/></svg>
<svg class="a" style="left:342px;top:439px" width="40" height="12" viewBox="0 0 40 12"><g stroke-linecap="square"><rect x="0" y="0" width="11" height="11" fill="#fafafa"/><path d="M10.5 0.5V11H0.5" stroke="#777" fill="none"/><path d="M5 2v7M1.5 5.5h7" stroke="#000" stroke-width="2"/><rect x="14" y="0" width="11" height="11" fill="#fafafa"/><path d="M24.5 0.5V11H14.5" stroke="#777" fill="none"/><rect x="16" y="5" width="4.5" height="4.5" fill="none" stroke="#000" stroke-width="1.3"/><path d="M18.5 7l5-5M20 1.8h3.8v3.8" stroke="#000" stroke-width="1.5" fill="none"/><rect x="28" y="0" width="11" height="11" fill="#fafafa"/><path d="M38.5 0.5V11H28.5" stroke="#777" fill="none"/><path d="M30 2l6.5 7M36.5 2l-6.5 7" stroke="#000" stroke-width="1.6"/></g></svg>
<div class="a" style="left:219px;top:454px;width:164px;height:18px;background:#f0f0f0;border:1px solid #6d6d6d;box-sizing:border-box;"></div>
<div class="a" style="left:228px;top:455px;width:1px;height:16px;background:#6d6d6d;"></div>
<div class="a" style="left:366px;top:455px;width:1px;height:16px;background:#6d6d6d;"></div>
<svg class="a" style="left:221px;top:459px" width="8" height="9" viewBox="0 0 8 9"><path d="M0.5 1h7l-3.5 4z" fill="#444"/><path d="M2 5h4l-2 3z" fill="#888"/></svg>
<div class="t" style="left:231px;top:457px;color:#000;font-size:11px;font-family:'Liberation Sans', sans-serif;">Name</div>
<div class="t" style="left:368px;top:456px;width:14px;overflow:hidden;font-size:11px;">Type</div>
<div class="a" style="left:219px;top:472px;width:164px;height:71px;background:#8aa0ff;"></div>
<div class="a" style="left:219px;top:547px;width:164px;height:15px;background:#f3f3f3;"></div>
<div class="a" style="left:219px;top:547px;width:16px;height:15px;background:#f0f0f0;box-shadow: inset -1px -1px 0 #a0a0a0, inset -2px -2px 0 #6a6a6a, inset 1px 1px 0 #fafafa;"></div>
<svg class="a" style="left:224px;top:550px" width="6" height="9" viewBox="0 0 6 9"><path d="M5 0.5v8L1 4.5z" fill="#000"/></svg>
<div class="a" style="left:235px;top:547px;width:48px;height:15px;background:#f0f0f0;box-shadow: inset -1px -1px 0 #a0a0a0, inset -2px -2px 0 #6a6a6a, inset 1px 1px 0 #fafafa;"></div>
<div class="a" style="left:367px;top:547px;width:16px;height:15px;background:#f0f0f0;box-shadow: inset -1px -1px 0 #a0a0a0, inset -2px -2px 0 #6a6a6a, inset 1px 1px 0 #fafafa;"></div>
<svg class="a" style="left:373px;top:550px" width="6" height="9" viewBox="0 0 6 9"><path d="M1 0.5v8L5 4.5z" fill="#000"/></svg>
<div class="a" style="left:385px;top:27px;width:7px;height:536px;background:#c8c8c8;"></div>
<div class="a" style="left:385px;top:27px;width:1px;height:536px;background:#fff;"></div>
<div class="a" style="left:392px;top:27px;width:1281px;height:536px;background:#f0f0f0;"></div>
<div class="a" style="left:392px;top:27px;width:1px;height:511px;background:#a0a0a0;"></div>
<div class="a" style="left:392px;top:27px;width:1281px;height:1px;background:#a0a0a0;"></div>
<div class="a" style="left:393px;top:28px;width:1px;height:510px;background:#fff;"></div>
<div class="a" style="left:394px;top:29px;width:1279px;height:18px;background:#99b4d1;"></div>
<svg class="a" style="left:394px;top:28px" width="20" height="20" viewBox="0 0 20 20"><rect x="1" y="2" width="16" height="16" fill="#fff"/><rect x="16" y="3" width="2" height="16" fill="#000"/><rect x="2" y="17" width="16" height="2" fill="#000"/><rect x="2" y="3" width="14" height="14" fill="#c8c8c8"/><rect x="3" y="4" width="12" height="2.5" fill="#fff"/><rect x="3" y="8" width="12" height="8" fill="#000"/><path d="M3 9.8h2.5v1.8h3V9.8h3v1.8H15M3 13.2h3v2.5h2.5v-1.5H9" stroke="#10a040" stroke-width="1.2" fill="none"/><rect x="7" y="8" width="1" height="8" fill="#30e8f8"/><rect x="10" y="14" width="5" height="1.3" fill="#5010e0"/></svg>
<div class="t" style="left:415px;top:31px;color:#000;font-size:11px;font-family:'Liberation Sans', sans-serif;">Wave - Default</div>
<div class="a" style="left:494px;top:34px;width:676px;height:1px;background:#c8f0ff;"></div>
<div class="a" style="left:494px;top:36px;width:676px;height:1px;background:#000;"></div>
<div class="a" style="left:494px;top:39px;width:676px;height:1px;background:#c8f0ff;"></div>
<div class="a" style="left:494px;top:41px;width:676px;height:1px;background:#000;"></div>
<svg class="a" style="left:1171px;top:33px" width="18" height="9" shape-rendering="crispEdges"><rect x="0" y="0" width="2" height="1" fill="#e8f8ff"/><rect x="0" y="1" width="1" height="1" fill="#e8f8ff"/><rect x="1" y="1" width="1" height="1" fill="#000"/><rect x="3" y="0" width="2" height="1" fill="#e8f8ff"/><rect x="3" y="1" width="1" height="1" fill="#e8f8ff"/><rect x="4" y="1" width="1" height="1" fill="#000"/><rect x="6" y="0" width="2" height="1" fill="#e8f8ff"/><rect x="6" y="1" width="1" height="1" fill="#e8f8ff"/><rect x="7" y="1" width="1" height="1" fill="#000"/><rect x="9" y="0" width="2" height="1" fill="#e8f8ff"/><rect x="9" y="1" width="1" height="1" fill="#e8f8ff"/><rect x="10" y="1" width="1" height="1" fill="#000"/><rect x="12" y="0" width="2" height="1" fill="#e8f8ff"/><rect x="12" y="1" width="1" height="1" fill="#e8f8ff"/><rect x="13" y="1" width="1" height="1" fill="#000"/><rect x="15" y="0" width="2" height="1" fill="#e8f8ff"/><rect x="15" y="1" width="1" height="1" fill="#e8f8ff"/><rect x="16" y="1" width="1" height="1" fill="#000"/><rect x="1" y="3" width="2" height="1" fill="#e8f8ff"/><rect x="1" y="4" width="1" height="1" fill="#e8f8ff"/><rect x="2" y="4" width="1" height="1" fill="#000"/><rect x="4" y="3" width="2" height="1" fill="#e8f8ff"/><rect x="4" y="4" width="1" height="1" fill="#e8f8ff"/><rect x="5" y="4" width="1" height="1" fill="#000"/><rect x="7" y="3" width="2" height="1" fill="#e8f8ff"/><rect x="7" y="4" width="1" height="1" fill="#e8f8ff"/><rect x="8" y="4" width="1" height="1" fill="#000"/><rect x="10" y="3" width="2" height="1" fill="#e8f8ff"/><rect x="10" y="4" width="1" height="1" fill="#e8f8ff"/><rect x="11" y="4" width="1" height="1" fill="#000"/><rect x="13" y="3" width="2" height="1" fill="#e8f8ff"/><rect x="13" y="4" width="1" height="1" fill="#e8f8ff"/><rect x="14" y="4" width="1" height="1" fill="#000"/><rect x="16" y="3" width="2" height="1" fill="#e8f8ff"/><rect x="16" y="4" width="1" height="1" fill="#e8f8ff"/><rect x="17" y="4" width="1" height="1" fill="#000"/><rect x="0" y="6" width="2" height="1" fill="#e8f8ff"/><rect x="0" y="7" width="1" height="1" fill="#e8f8ff"/><rect x="1" y="7" width="1" height="1" fill="#000"/><rect x="3" y="6" width="2" height="1" fill="#e8f8ff"/><rect x="3" y="7" width="1" height="1" fill="#e8f8ff"/><rect x="4" y="7" width="1" height="1" fill="#000"/><rect x="6" y="6" width="2" height="1" fill="#e8f8ff"/><rect x="6" y="7" width="1" height="1" fill="#e8f8ff"/><rect x="7" y="7" width="1" height="1" fill="#000"/><rect x="9" y="6" width="2" height="1" fill="#e8f8ff"/><rect x="9" y="7" width="1" height="1" fill="#e8f8ff"/><rect x="10" y="7" width="1" height="1" fill="#000"/><rect x="12" y="6" width="2" height="1" fill="#e8f8ff"/><rect x="12" y="7" width="1" height="1" fill="#e8f8ff"/><rect x="13" y="7" width="1" height="1" fill="#000"/><rect x="15" y="6" width="2" height="1" fill="#e8f8ff"/><rect x="15" y="7" width="1" height="1" fill="#e8f8ff"/><rect x="16" y="7" width="1" height="1" fill="#000"/></svg>
<div class="a" style="left:1191px;top:34px;width:482px;height:1px;background:#c8f0ff;"></div>
<div class="a" style="left:1191px;top:36px;width:482px;height:1px;background:#000;"></div>
<div class="a" style="left:1191px;top:39px;width:482px;height:1px;background:#c8f0ff;"></div>
<div class="a" style="left:1191px;top:41px;width:482px;height:1px;background:#000;"></div>
<div class="a" style="left:393px;top:47px;width:1280px;height:2px;background:#fff;"></div>
<div class="a" style="left:396px;top:49px;width:1277px;height:488px;background:#808080;"></div>
<div class="a" style="left:396px;top:49px;width:1px;height:488px;background:#606060;"></div>
<svg class="a" style="left:404px;top:49px" width="20" height="20" viewBox="0 0 20 20"><path d="M2 8L8 2L11.5 5.5L10 7L8 5L3.5 9.5Z" fill="#e428f4" stroke="#8a10a8" stroke-width="0.7"/><rect x="11" y="7.5" width="7" height="7.5" fill="#14b840" stroke="#0a7a28" stroke-width="0.8"/><circle cx="11.5" cy="8" r="3.2" fill="#00f0ff" stroke="#5a90b0" stroke-width="0.8"/><path d="M1.5 13L7 7.5L12.5 13L7 18.5Z" fill="#0450f0"/></svg>
<svg class="a" style="left:426px;top:59px" width="6" height="5" viewBox="0 0 6 5"><path d="M0 0h6l-3 3.5z" fill="#000"/></svg>
<div class="t" style="right:872px;top:52px;color:#fff;font-size:11px;">Msgs</div>
<div class="a" style="left:397px;top:69px;width:306px;height:2px;background:#fff;"></div>
<div class="a" style="left:705px;top:69px;width:101px;height:2px;background:#fff;"></div>
<div class="a" style="left:808px;top:69px;width:865px;height:2px;background:#fff;"></div>
<div class="a" style="left:703px;top:49px;width:2px;height:488px;background:#f4f4f4;"></div>
<div class="a" style="left:806px;top:49px;width:2px;height:488px;background:#f4f4f4;"></div>
<div class="a" style="left:397px;top:71px;width:8px;height:401px;background:#fff;"></div>
<div class="a" style="left:405px;top:210px;width:298px;height:16px;background:#fff;"></div>
<div class="a" style="left:705px;top:210px;width:101px;height:16px;background:#fff;"></div>
<svg class="a" style="left:425px;top:74px" width="15" height="15" viewBox="0 0 15 15"><path d="M7.5 0L15 7.5L7.5 15L0 7.5Z" fill="#1a94d4"/><path d="M7.5 0L0 7.5L3.5 7.5L7.5 3.5Z" fill="#a8e8fa"/><path d="M15 7.5L7.5 15L7.5 11L11 7.5Z" fill="#086494"/><path d="M7.5 3.5L11.5 7.5L7.5 11.5L3.5 7.5Z" fill="#10c4f4"/></svg>
<div class="t" style="left:445px;top:74px;color:#fff;font-size:11px;font-family:'Liberation Sans', sans-serif;">/mips_testbench/test/clock</div>
<div class="t" style="left:707px;top:74px;color:#fff;font-size:11px;font-family:'Liberation Sans', sans-serif;">St0</div>
<div class="a" style="left:421px;top:99px;width:4px;height:1px;background:#c0c0c0;"></div>
<svg class="a" style="left:410px;top:94px" width="11" height="11" viewBox="0 0 11 11"><defs><linearGradient id="pg" x1="0" y1="0" x2="0" y2="1"><stop offset="0" stop-color="#fff"/><stop offset="0.6" stop-color="#f0f2fa"/><stop offset="1" stop-color="#c0c8e0"/></linearGradient></defs><rect x="0.5" y="0.5" width="10" height="10" rx="1.5" fill="url(#pg)" stroke="#a8b0c8"/><path d="M1.5 10.5h8" stroke="#5a6888"/><path d="M2.8 5.5h5.4M5.5 2.8v5.4" stroke="#000" stroke-width="1.4"/></svg>
<svg class="a" style="left:425px;top:91px" width="15" height="15" viewBox="0 0 15 15"><path d="M7.5 0L15 7.5L7.5 15L0 7.5Z" fill="#1a94d4"/><path d="M7.5 0L0 7.5L3.5 7.5L7.5 3.5Z" fill="#a8e8fa"/><path d="M15 7.5L7.5 15L7.5 11L11 7.5Z" fill="#086494"/><path d="M7.5 3.5L11.5 7.5L7.5 11.5L3.5 7.5Z" fill="#10c4f4"/></svg>
<div class="t" style="left:445px;top:91px;color:#fff;font-size:11px;font-family:'Liberation Sans', sans-serif;">/mips_testbench/test/PC</div>
<div class="t" style="left:707px;top:91px;color:#fff;font-size:11px;font-family:'Liberation Sans', sans-serif;">0000000000000...</div>
<div class="a" style="left:421px;top:116px;width:4px;height:1px;background:#c0c0c0;"></div>
<svg class="a" style="left:410px;top:111px" width="11" height="11" viewBox="0 0 11 11"><defs><linearGradient id="pg" x1="0" y1="0" x2="0" y2="1"><stop offset="0" stop-color="#fff"/><stop offset="0.6" stop-color="#f0f2fa"/><stop offset="1" stop-color="#c0c8e0"/></linearGradient></defs><rect x="0.5" y="0.5" width="10" height="10" rx="1.5" fill="url(#pg)" stroke="#a8b0c8"/><path d="M1.5 10.5h8" stroke="#5a6888"/><path d="M2.8 5.5h5.4M5.5 2.8v5.4" stroke="#000" stroke-width="1.4"/></svg>
<svg class="a" style="left:425px;top:108px" width="15" height="15" viewBox="0 0 15 15"><path d="M7.5 0L15 7.5L7.5 15L0 7.5Z" fill="#1a94d4"/><path d="M7.5 0L0 7.5L3.5 7.5L7.5 3.5Z" fill="#a8e8fa"/><path d="M15 7.5L7.5 15L7.5 11L11 7.5Z" fill="#086494"/><path d="M7.5 3.5L11.5 7.5L7.5 11.5L3.5 7.5Z" fill="#10c4f4"/></svg>
<div class="t" style="left:445px;top:108px;color:#fff;font-size:11px;font-family:'Liberation Sans', sans-serif;">/mips_testbench/test/instruction</div>
<div class="t" style="left:707px;top:108px;color:#fff;font-size:11px;font-family:'Liberation Sans', sans-serif;">0000000100001...</div>
<div class="a" style="left:421px;top:133px;width:4px;height:1px;background:#c0c0c0;"></div>
<svg class="a" style="left:410px;top:128px" width="11" height="11" viewBox="0 0 11 11"><defs><linearGradient id="pg" x1="0" y1="0" x2="0" y2="1"><stop offset="0" stop-color="#fff"/><stop offset="0.6" stop-color="#f0f2fa"/><stop offset="1" stop-color="#c0c8e0"/></linearGradient></defs><rect x="0.5" y="0.5" width="10" height="10" rx="1.5" fill="url(#pg)" stroke="#a8b0c8"/><path d="M1.5 10.5h8" stroke="#5a6888"/><path d="M2.8 5.5h5.4M5.5 2.8v5.4" stroke="#000" stroke-width="1.4"/></svg>
<svg class="a" style="left:425px;top:125px" width="15" height="15" viewBox="0 0 15 15"><path d="M7.5 0L15 7.5L7.5 15L0 7.5Z" fill="#1a94d4"/><path d="M7.5 0L0 7.5L3.5 7.5L7.5 3.5Z" fill="#a8e8fa"/><path d="M15 7.5L7.5 15L7.5 11L11 7.5Z" fill="#086494"/><path d="M7.5 3.5L11.5 7.5L7.5 11.5L3.5 7.5Z" fill="#10c4f4"/></svg>
<div class="t" style="left:445px;top:125px;color:#fff;font-size:11px;font-family:'Liberation Sans', sans-serif;">/mips_testbench/test/funct</div>
<div class="t" style="left:707px;top:125px;color:#fff;font-size:11px;font-family:'Liberation Sans', sans-serif;">100000</div>
<div class="a" style="left:421px;top:150px;width:4px;height:1px;background:#c0c0c0;"></div>
<svg class="a" style="left:410px;top:145px" width="11" height="11" viewBox="0 0 11 11"><defs><linearGradient id="pg" x1="0" y1="0" x2="0" y2="1"><stop offset="0" stop-color="#fff"/><stop offset="0.6" stop-color="#f0f2fa"/><stop offset="1" stop-color="#c0c8e0"/></linearGradient></defs><rect x="0.5" y="0.5" width="10" height="10" rx="1.5" fill="url(#pg)" stroke="#a8b0c8"/><path d="M1.5 10.5h8" stroke="#5a6888"/><path d="M2.8 5.5h5.4M5.5 2.8v5.4" stroke="#000" stroke-width="1.4"/></svg>
<svg class="a" style="left:425px;top:142px" width="15" height="15" viewBox="0 0 15 15"><path d="M7.5 0L15 7.5L7.5 15L0 7.5Z" fill="#1a94d4"/><path d="M7.5 0L0 7.5L3.5 7.5L7.5 3.5Z" fill="#a8e8fa"/><path d="M15 7.5L7.5 15L7.5 11L11 7.5Z" fill="#086494"/><path d="M7.5 3.5L11.5 7.5L7.5 11.5L3.5 7.5Z" fill="#10c4f4"/></svg>
<div class="t" style="left:445px;top:142px;color:#fff;font-size:11px;font-family:'Liberation Sans', sans-serif;">/mips_testbench/test/rs</div>
<div class="t" style="left:707px;top:142px;color:#fff;font-size:11px;font-family:'Liberation Sans', sans-serif;">01000</div>
<div class="a" style="left:421px;top:167px;width:4px;height:1px;background:#c0c0c0;"></div>
<svg class="a" style="left:410px;top:162px" width="11" height="11" viewBox="0 0 11 11"><defs><linearGradient id="pg" x1="0" y1="0" x2="0" y2="1"><stop offset="0" stop-color="#fff"/><stop offset="0.6" stop-color="#f0f2fa"/><stop offset="1" stop-color="#c0c8e0"/></linearGradient></defs><rect x="0.5" y="0.5" width="10" height="10" rx="1.5" fill="url(#pg)" stroke="#a8b0c8"/><path d="M1.5 10.5h8" stroke="#5a6888"/><path d="M2.8 5.5h5.4M5.5 2.8v5.4" stroke="#000" stroke-width="1.4"/></svg>
<svg class="a" style="left:425px;top:159px" width="15" height="15" viewBox="0 0 15 15"><path d="M7.5 0L15 7.5L7.5 15L0 7.5Z" fill="#1a94d4"/><path d="M7.5 0L0 7.5L3.5 7.5L7.5 3.5Z" fill="#a8e8fa"/><path d="M15 7.5L7.5 15L7.5 11L11 7.5Z" fill="#086494"/><path d="M7.5 3.5L11.5 7.5L7.5 11.5L3.5 7.5Z" fill="#10c4f4"/></svg>
<div class="t" style="left:445px;top:159px;color:#fff;font-size:11px;font-family:'Liberation Sans', sans-serif;">/mips_testbench/test/rt</div>
<div class="t" style="left:707px;top:159px;color:#fff;font-size:11px;font-family:'Liberation Sans', sans-serif;">01001</div>
<div class="a" style="left:421px;top:184px;width:4px;height:1px;background:#c0c0c0;"></div>
<svg class="a" style="left:410px;top:179px" width="11" height="11" viewBox="0 0 11 11"><defs><linearGradient id="pg" x1="0" y1="0" x2="0" y2="1"><stop offset="0" stop-color="#fff"/><stop offset="0.6" stop-color="#f0f2fa"/><stop offset="1" stop-color="#c0c8e0"/></linearGradient></defs><rect x="0.5" y="0.5" width="10" height="10" rx="1.5" fill="url(#pg)" stroke="#a8b0c8"/><path d="M1.5 10.5h8" stroke="#5a6888"/><path d="M2.8 5.5h5.4M5.5 2.8v5.4" stroke="#000" stroke-width="1.4"/></svg>
<svg class="a" style="left:425px;top:176px" width="15" height="15" viewBox="0 0 15 15"><path d="M7.5 0L15 7.5L7.5 15L0 7.5Z" fill="#1a94d4"/><path d="M7.5 0L0 7.5L3.5 7.5L7.5 3.5Z" fill="#a8e8fa"/><path d="M15 7.5L7.5 15L7.5 11L11 7.5Z" fill="#086494"/><path d="M7.5 3.5L11.5 7.5L7.5 11.5L3.5 7.5Z" fill="#10c4f4"/></svg>
<div class="t" style="left:445px;top:176px;color:#fff;font-size:11px;font-family:'Liberation Sans', sans-serif;">/mips_testbench/test/rd</div>
<div class="t" style="left:707px;top:176px;color:#fff;font-size:11px;font-family:'Liberation Sans', sans-serif;">11111</div>
<div class="a" style="left:421px;top:201px;width:4px;height:1px;background:#c0c0c0;"></div>
<svg class="a" style="left:410px;top:196px" width="11" height="11" viewBox="0 0 11 11"><defs><linearGradient id="pg" x1="0" y1="0" x2="0" y2="1"><stop offset="0" stop-color="#fff"/><stop offset="0.6" stop-color="#f0f2fa"/><stop offset="1" stop-color="#c0c8e0"/></linearGradient></defs><rect x="0.5" y="0.5" width="10" height="10" rx="1.5" fill="url(#pg)" stroke="#a8b0c8"/><path d="M1.5 10.5h8" stroke="#5a6888"/><path d="M2.8 5.5h5.4M5.5 2.8v5.4" stroke="#000" stroke-width="1.4"/></svg>
<svg class="a" style="left:425px;top:193px" width="15" height="15" viewBox="0 0 15 15"><path d="M7.5 0L15 7.5L7.5 15L0 7.5Z" fill="#1a94d4"/><path d="M7.5 0L0 7.5L3.5 7.5L7.5 3.5Z" fill="#a8e8fa"/><path d="M15 7.5L7.5 15L7.5 11L11 7.5Z" fill="#086494"/><path d="M7.5 3.5L11.5 7.5L7.5 11.5L3.5 7.5Z" fill="#10c4f4"/></svg>
<div class="t" style="left:445px;top:193px;color:#fff;font-size:11px;font-family:'Liberation Sans', sans-serif;">/mips_testbench/test/shamt</div>
<div class="t" style="left:707px;top:193px;color:#fff;font-size:11px;font-family:'Liberation Sans', sans-serif;">00010</div>
<div class="a" style="left:421px;top:218px;width:4px;height:1px;background:#c0c0c0;"></div>
<svg class="a" style="left:410px;top:213px" width="11" height="11" viewBox="0 0 11 11"><defs><linearGradient id="pg" x1="0" y1="0" x2="0" y2="1"><stop offset="0" stop-color="#fff"/><stop offset="0.6" stop-color="#f0f2fa"/><stop offset="1" stop-color="#c0c8e0"/></linearGradient></defs><rect x="0.5" y="0.5" width="10" height="10" rx="1.5" fill="url(#pg)" stroke="#a8b0c8"/><path d="M1.5 10.5h8" stroke="#5a6888"/><path d="M2.8 5.5h5.4M5.5 2.8v5.4" stroke="#000" stroke-width="1.4"/></svg>
<svg class="a" style="left:425px;top:210px" width="15" height="15" viewBox="0 0 15 15"><path d="M7.5 0L15 7.5L7.5 15L0 7.5Z" fill="#1a94d4"/><path d="M7.5 0L0 7.5L3.5 7.5L7.5 3.5Z" fill="#a8e8fa"/><path d="M15 7.5L7.5 15L7.5 11L11 7.5Z" fill="#086494"/><path d="M7.5 3.5L11.5 7.5L7.5 11.5L3.5 7.5Z" fill="#10c4f4"/></svg>
<div class="t" style="left:445px;top:210px;color:#000;font-size:11px;font-family:'Liberation Sans', sans-serif;">/mips_testbench/test/address</div>
<div class="t" style="left:707px;top:210px;color:#000;font-size:11px;font-family:'Liberation Sans', sans-serif;letter-spacing:0.55px;">xxxxxxxxxxxxx...</div>
<div class="a" style="left:421px;top:235px;width:4px;height:1px;background:#c0c0c0;"></div>
<svg class="a" style="left:410px;top:230px" width="11" height="11" viewBox="0 0 11 11"><defs><linearGradient id="pg" x1="0" y1="0" x2="0" y2="1"><stop offset="0" stop-color="#fff"/><stop offset="0.6" stop-color="#f0f2fa"/><stop offset="1" stop-color="#c0c8e0"/></linearGradient></defs><rect x="0.5" y="0.5" width="10" height="10" rx="1.5" fill="url(#pg)" stroke="#a8b0c8"/><path d="M1.5 10.5h8" stroke="#5a6888"/><path d="M2.8 5.5h5.4M5.5 2.8v5.4" stroke="#000" stroke-width="1.4"/></svg>
<svg class="a" style="left:425px;top:227px" width="15" height="15" viewBox="0 0 15 15"><path d="M7.5 0L15 7.5L7.5 15L0 7.5Z" fill="#1a94d4"/><path d="M7.5 0L0 7.5L3.5 7.5L7.5 3.5Z" fill="#a8e8fa"/><path d="M15 7.5L7.5 15L7.5 11L11 7.5Z" fill="#086494"/><path d="M7.5 3.5L11.5 7.5L7.5 11.5L3.5 7.5Z" fill="#10c4f4"/></svg>
<div class="t" style="left:445px;top:227px;color:#fff;font-size:11px;font-family:'Liberation Sans', sans-serif;">/mips_testbench/test/immediate</div>
<div class="t" style="left:707px;top:227px;color:#fff;font-size:11px;font-family:'Liberation Sans', sans-serif;letter-spacing:0.55px;">xxxxxxxxxxxxxxxx</div>
<div class="a" style="left:421px;top:252px;width:4px;height:1px;background:#c0c0c0;"></div>
<svg class="a" style="left:410px;top:247px" width="11" height="11" viewBox="0 0 11 11"><defs><linearGradient id="pg" x1="0" y1="0" x2="0" y2="1"><stop offset="0" stop-color="#fff"/><stop offset="0.6" stop-color="#f0f2fa"/><stop offset="1" stop-color="#c0c8e0"/></linearGradient></defs><rect x="0.5" y="0.5" width="10" height="10" rx="1.5" fill="url(#pg)" stroke="#a8b0c8"/><path d="M1.5 10.5h8" stroke="#5a6888"/><path d="M2.8 5.5h5.4M5.5 2.8v5.4" stroke="#000" stroke-width="1.4"/></svg>
<svg class="a" style="left:425px;top:244px" width="15" height="15" viewBox="0 0 15 15"><path d="M7.5 0L15 7.5L7.5 15L0 7.5Z" fill="#1a94d4"/><path d="M7.5 0L0 7.5L3.5 7.5L7.5 3.5Z" fill="#a8e8fa"/><path d="M15 7.5L7.5 15L7.5 11L11 7.5Z" fill="#086494"/><path d="M7.5 3.5L11.5 7.5L7.5 11.5L3.5 7.5Z" fill="#10c4f4"/></svg>
<div class="t" style="left:445px;top:244px;color:#fff;font-size:11px;font-family:'Liberation Sans', sans-serif;">/mips_testbench/test/opcode</div>
<div class="t" style="left:707px;top:244px;color:#fff;font-size:11px;font-family:'Liberation Sans', sans-serif;">000000</div>
<svg class="a" style="left:425px;top:261px" width="15" height="15" viewBox="0 0 15 15"><path d="M7.5 0L15 7.5L7.5 15L0 7.5Z" fill="#1a94d4"/><path d="M7.5 0L0 7.5L3.5 7.5L7.5 3.5Z" fill="#a8e8fa"/><path d="M15 7.5L7.5 15L7.5 11L11 7.5Z" fill="#086494"/><path d="M7.5 3.5L11.5 7.5L7.5 11.5L3.5 7.5Z" fill="#10c4f4"/></svg>
<div class="t" style="left:445px;top:261px;color:#fff;font-size:11px;font-family:'Liberation Sans', sans-serif;">/mips_testbench/test/read_reg_signal</div>
<div class="t" style="left:707px;top:261px;color:#fff;font-size:11px;font-family:'Liberation Sans', sans-serif;">St1</div>
<svg class="a" style="left:425px;top:278px" width="15" height="15" viewBox="0 0 15 15"><path d="M7.5 0L15 7.5L7.5 15L0 7.5Z" fill="#1a94d4"/><path d="M7.5 0L0 7.5L3.5 7.5L7.5 3.5Z" fill="#a8e8fa"/><path d="M15 7.5L7.5 15L7.5 11L11 7.5Z" fill="#086494"/><path d="M7.5 3.5L11.5 7.5L7.5 11.5L3.5 7.5Z" fill="#10c4f4"/></svg>
<div class="t" style="left:445px;top:278px;color:#fff;font-size:11px;font-family:'Liberation Sans', sans-serif;">/mips_testbench/test/write_reg_signal</div>
<div class="t" style="left:707px;top:278px;color:#fff;font-size:11px;font-family:'Liberation Sans', sans-serif;">St1</div>
<svg class="a" style="left:425px;top:295px" width="15" height="15" viewBox="0 0 15 15"><path d="M7.5 0L15 7.5L7.5 15L0 7.5Z" fill="#1a94d4"/><path d="M7.5 0L0 7.5L3.5 7.5L7.5 3.5Z" fill="#a8e8fa"/><path d="M15 7.5L7.5 15L7.5 11L11 7.5Z" fill="#086494"/><path d="M7.5 3.5L11.5 7.5L7.5 11.5L3.5 7.5Z" fill="#10c4f4"/></svg>
<div class="t" style="left:445px;top:295px;color:#fff;font-size:11px;font-family:'Liberation Sans', sans-serif;">/mips_testbench/test/regDst_signal</div>
<div class="t" style="left:707px;top:295px;color:#fff;font-size:11px;font-family:'Liberation Sans', sans-serif;">St1</div>
<svg class="a" style="left:425px;top:312px" width="15" height="15" viewBox="0 0 15 15"><path d="M7.5 0L15 7.5L7.5 15L0 7.5Z" fill="#1a94d4"/><path d="M7.5 0L0 7.5L3.5 7.5L7.5 3.5Z" fill="#a8e8fa"/><path d="M15 7.5L7.5 15L7.5 11L11 7.5Z" fill="#086494"/><path d="M7.5 3.5L11.5 7.5L7.5 11.5L3.5 7.5Z" fill="#10c4f4"/></svg>
<div class="t" style="left:445px;top:312px;color:#fff;font-size:11px;font-family:'Liberation Sans', sans-serif;">/mips_testbench/test/read_mem_signal</div>
<div class="t" style="left:707px;top:312px;color:#fff;font-size:11px;font-family:'Liberation Sans', sans-serif;">St0</div>
<svg class="a" style="left:425px;top:329px" width="15" height="15" viewBox="0 0 15 15"><path d="M7.5 0L15 7.5L7.5 15L0 7.5Z" fill="#1a94d4"/><path d="M7.5 0L0 7.5L3.5 7.5L7.5 3.5Z" fill="#a8e8fa"/><path d="M15 7.5L7.5 15L7.5 11L11 7.5Z" fill="#086494"/><path d="M7.5 3.5L11.5 7.5L7.5 11.5L3.5 7.5Z" fill="#10c4f4"/></svg>
<div class="t" style="left:445px;top:329px;color:#fff;font-size:11px;font-family:'Liberation Sans', sans-serif;">/mips_testbench/test/write_mem_signal</div>
<div class="t" style="left:707px;top:329px;color:#fff;font-size:11px;font-family:'Liberation Sans', sans-serif;">St0</div>
<svg class="a" style="left:425px;top:346px" width="15" height="15" viewBox="0 0 15 15"><path d="M7.5 0L15 7.5L7.5 15L0 7.5Z" fill="#1a94d4"/><path d="M7.5 0L0 7.5L3.5 7.5L7.5 3.5Z" fill="#a8e8fa"/><path d="M15 7.5L7.5 15L7.5 11L11 7.5Z" fill="#086494"/><path d="M7.5 3.5L11.5 7.5L7.5 11.5L3.5 7.5Z" fill="#10c4f4"/></svg>
<div class="t" style="left:445px;top:346px;color:#fff;font-size:11px;font-family:'Liberation Sans', sans-serif;">/mips_testbench/test/branch_signal</div>
<div class="t" style="left:707px;top:346px;color:#fff;font-size:11px;font-family:'Liberation Sans', sans-serif;">StX</div>
<div class="a" style="left:421px;top:371px;width:4px;height:1px;background:#c0c0c0;"></div>
<svg class="a" style="left:410px;top:366px" width="11" height="11" viewBox="0 0 11 11"><defs><linearGradient id="pg" x1="0" y1="0" x2="0" y2="1"><stop offset="0" stop-color="#fff"/><stop offset="0.6" stop-color="#f0f2fa"/><stop offset="1" stop-color="#c0c8e0"/></linearGradient></defs><rect x="0.5" y="0.5" width="10" height="10" rx="1.5" fill="url(#pg)" stroke="#a8b0c8"/><path d="M1.5 10.5h8" stroke="#5a6888"/><path d="M2.8 5.5h5.4M5.5 2.8v5.4" stroke="#000" stroke-width="1.4"/></svg>
<svg class="a" style="left:425px;top:363px" width="15" height="15" viewBox="0 0 15 15"><path d="M7.5 0L15 7.5L7.5 15L0 7.5Z" fill="#1a94d4"/><path d="M7.5 0L0 7.5L3.5 7.5L7.5 3.5Z" fill="#a8e8fa"/><path d="M15 7.5L7.5 15L7.5 11L11 7.5Z" fill="#086494"/><path d="M7.5 3.5L11.5 7.5L7.5 11.5L3.5 7.5Z" fill="#10c4f4"/></svg>
<div class="t" style="left:445px;top:363px;color:#fff;font-size:11px;font-family:'Liberation Sans', sans-serif;">/mips_testbench/test/write_data</div>
<div class="t" style="left:707px;top:363px;color:#fff;font-size:11px;font-family:'Liberation Sans', sans-serif;">0000000000000...</div>
<div class="a" style="left:421px;top:388px;width:4px;height:1px;background:#c0c0c0;"></div>
<svg class="a" style="left:410px;top:383px" width="11" height="11" viewBox="0 0 11 11"><defs><linearGradient id="pg" x1="0" y1="0" x2="0" y2="1"><stop offset="0" stop-color="#fff"/><stop offset="0.6" stop-color="#f0f2fa"/><stop offset="1" stop-color="#c0c8e0"/></linearGradient></defs><rect x="0.5" y="0.5" width="10" height="10" rx="1.5" fill="url(#pg)" stroke="#a8b0c8"/><path d="M1.5 10.5h8" stroke="#5a6888"/><path d="M2.8 5.5h5.4M5.5 2.8v5.4" stroke="#000" stroke-width="1.4"/></svg>
<svg class="a" style="left:425px;top:380px" width="15" height="15" viewBox="0 0 15 15"><path d="M7.5 0L15 7.5L7.5 15L0 7.5Z" fill="#1a94d4"/><path d="M7.5 0L0 7.5L3.5 7.5L7.5 3.5Z" fill="#a8e8fa"/><path d="M15 7.5L7.5 15L7.5 11L11 7.5Z" fill="#086494"/><path d="M7.5 3.5L11.5 7.5L7.5 11.5L3.5 7.5Z" fill="#10c4f4"/></svg>
<div class="t" style="left:445px;top:380px;color:#fff;font-size:11px;font-family:'Liberation Sans', sans-serif;">/mips_testbench/test/rs_content</div>
<div class="t" style="left:707px;top:380px;color:#fff;font-size:11px;font-family:'Liberation Sans', sans-serif;">0000000000000...</div>
<div class="a" style="left:421px;top:405px;width:4px;height:1px;background:#c0c0c0;"></div>
<svg class="a" style="left:410px;top:400px" width="11" height="11" viewBox="0 0 11 11"><defs><linearGradient id="pg" x1="0" y1="0" x2="0" y2="1"><stop offset="0" stop-color="#fff"/><stop offset="0.6" stop-color="#f0f2fa"/><stop offset="1" stop-color="#c0c8e0"/></linearGradient></defs><rect x="0.5" y="0.5" width="10" height="10" rx="1.5" fill="url(#pg)" stroke="#a8b0c8"/><path d="M1.5 10.5h8" stroke="#5a6888"/><path d="M2.8 5.5h5.4M5.5 2.8v5.4" stroke="#000" stroke-width="1.4"/></svg>
<svg class="a" style="left:425px;top:397px" width="15" height="15" viewBox="0 0 15 15"><path d="M7.5 0L15 7.5L7.5 15L0 7.5Z" fill="#1a94d4"/><path d="M7.5 0L0 7.5L3.5 7.5L7.5 3.5Z" fill="#a8e8fa"/><path d="M15 7.5L7.5 15L7.5 11L11 7.5Z" fill="#086494"/><path d="M7.5 3.5L11.5 7.5L7.5 11.5L3.5 7.5Z" fill="#10c4f4"/></svg>
<div class="t" style="left:445px;top:397px;color:#fff;font-size:11px;font-family:'Liberation Sans', sans-serif;">/mips_testbench/test/rt_content</div>
<div class="t" style="left:707px;top:397px;color:#fff;font-size:11px;font-family:'Liberation Sans', sans-serif;">0000000000000...</div>
<div class="a" style="left:421px;top:422px;width:4px;height:1px;background:#c0c0c0;"></div>
<svg class="a" style="left:410px;top:417px" width="11" height="11" viewBox="0 0 11 11"><defs><linearGradient id="pg" x1="0" y1="0" x2="0" y2="1"><stop offset="0" stop-color="#fff"/><stop offset="0.6" stop-color="#f0f2fa"/><stop offset="1" stop-color="#c0c8e0"/></linearGradient></defs><rect x="0.5" y="0.5" width="10" height="10" rx="1.5" fill="url(#pg)" stroke="#a8b0c8"/><path d="M1.5 10.5h8" stroke="#5a6888"/><path d="M2.8 5.5h5.4M5.5 2.8v5.4" stroke="#000" stroke-width="1.4"/></svg>
<svg class="a" style="left:425px;top:414px" width="15" height="15" viewBox="0 0 15 15"><path d="M7.5 0L15 7.5L7.5 15L0 7.5Z" fill="#1a94d4"/><path d="M7.5 0L0 7.5L3.5 7.5L7.5 3.5Z" fill="#a8e8fa"/><path d="M15 7.5L7.5 15L7.5 11L11 7.5Z" fill="#086494"/><path d="M7.5 3.5L11.5 7.5L7.5 11.5L3.5 7.5Z" fill="#10c4f4"/></svg>
<div class="t" style="left:445px;top:414px;color:#fff;font-size:11px;font-family:'Liberation Sans', sans-serif;">/mips_testbench/test/memory_read_data</div>
<div class="t" style="left:707px;top:414px;color:#fff;font-size:11px;font-family:'Liberation Sans', sans-serif;letter-spacing:0.55px;">xxxxxxxxxxxxx...</div>
<svg class="a" style="left:427px;top:82px" width="11" height="8" viewBox="0 0 11 8"><path d="M0 3h5V0l5 4-5 4V5H0z" fill="#30c010" stroke="#0a6000" stroke-width="0.6"/></svg>
<div class="a" style="left:405px;top:430px;width:293px;height:1px;background:#000;"></div>
<svg class="a" style="left:405px;top:426px" width="6" height="9" viewBox="0 0 6 9"><path d="M0.5 0.5l4 4-4 4z" fill="none" stroke="#000"/></svg>
<div class="a" style="left:709px;top:430px;width:93px;height:1px;background:#000;"></div>
<div class="a" style="left:397px;top:473px;width:306px;height:2px;background:#fff;"></div>
<div class="a" style="left:705px;top:473px;width:101px;height:2px;background:#fff;"></div>
<div class="a" style="left:808px;top:473px;width:865px;height:2px;background:#fff;"></div>
<svg class="a" style="left:405px;top:480px" width="40" height="13" viewBox="0 0 40 13"><path d="M1.5 8l2.5-6.5 2.5 6.5M2.5 5.8h3M6.5 1.5l2 6.5 2-6.5" stroke="#505050" stroke-width="1.3" fill="none"/><path d="M1 10.5h10M2.5 9l-1.5 1.5 1.5 1.5M9.5 9l1.5 1.5-1.5 1.5" stroke="#4a8ae8" stroke-width="1.1" fill="none"/><rect x="12.5" y="1.5" width="10" height="9" fill="#dce8f8" stroke="#5a8ad0"/><rect x="13" y="2" width="9" height="2" fill="#5a8ad0"/><path d="M14 6h5M14 8h3" stroke="#8aa8d8"/><path d="M17 12l5-5" stroke="#5a8ad0" stroke-width="2"/><circle cx="30" cy="6" r="5" fill="#48b048"/><circle cx="30" cy="6" r="4" fill="#60c860"/><path d="M30 3.5v5M27.5 6h5" stroke="#fff" stroke-width="1.8"/></svg>
<div class="t" style="right:981px;top:479px;color:#fff;font-size:11px;">Now</div>
<div class="t" style="right:877px;top:479px;color:#fff;font-size:11px;">100000 ps</div>
<div class="a" style="left:445px;top:497px;width:258px;height:17px;background:#fff;"></div>
<div class="a" style="left:705px;top:497px;width:101px;height:17px;background:#fff;"></div>
<svg class="a" style="left:405px;top:498px" width="42" height="14" viewBox="0 0 42 14"><path d="M6.5 5.5V3.5a2.7 2.7 0 0 1 5.4 0" stroke="#909090" stroke-width="1.3" fill="none"/><rect x="4" y="6" width="10" height="7" fill="#f0c040" stroke="#d09020" stroke-width="0.8"/><rect x="8" y="8.5" width="2" height="2" fill="#b07010"/><path d="M17 12.5l6-6" stroke="#5a8ad8" stroke-width="2.6" stroke-linecap="round"/><path d="M22 7.5a2.5 2.5 0 1 1 3-3.5l-1.8 0.5" stroke="#909090" stroke-width="1.4" fill="none"/><circle cx="34" cy="7" r="5.3" fill="#e04848"/><circle cx="34" cy="7" r="4" fill="#f06060"/><path d="M31.3 7h5.4" stroke="#fff" stroke-width="2"/></svg>
<div class="t" style="right:980px;top:499px;color:#000;font-size:11px;">Cursor 1</div>
<div class="t" style="right:877px;top:499px;color:#000;font-size:11px;">0 ps</div>
<div class="a" style="left:397px;top:514px;width:306px;height:2px;background:#fff;"></div>
<div class="a" style="left:705px;top:514px;width:101px;height:2px;background:#fff;"></div>
<div class="a" style="left:808px;top:514px;width:865px;height:2px;background:#fff;"></div>
<div class="a" style="left:405px;top:517px;width:298px;height:18px;background:#808080;"></div>
<div class="a" style="left:405px;top:518px;width:297px;height:17px;background:#f3f3f3;"></div>
<div class="a" style="left:405px;top:518px;width:16px;height:17px;background:#f0f0f0;box-shadow: inset -1px -1px 0 #a0a0a0, inset -2px -2px 0 #6a6a6a, inset 1px 1px 0 #fafafa;"></div>
<svg class="a" style="left:410px;top:522px" width="6" height="9" viewBox="0 0 6 9"><path d="M5 0.5v8L1 4.5z" fill="#a0a0a0"/></svg>
<div class="a" style="left:686px;top:518px;width:16px;height:17px;background:#f0f0f0;box-shadow: inset -1px -1px 0 #a0a0a0, inset -2px -2px 0 #6a6a6a, inset 1px 1px 0 #fafafa;"></div>
<svg class="a" style="left:692px;top:522px" width="6" height="9" viewBox="0 0 6 9"><path d="M1 0.5v8L5 4.5z" fill="#a0a0a0"/></svg>
<div class="a" style="left:705px;top:518px;width:100px;height:17px;background:#f3f3f3;"></div>
<div class="a" style="left:705px;top:518px;width:16px;height:17px;background:#f0f0f0;box-shadow: inset -1px -1px 0 #a0a0a0, inset -2px -2px 0 #6a6a6a, inset 1px 1px 0 #fafafa;"></div>
<svg class="a" style="left:710px;top:522px" width="6" height="9" viewBox="0 0 6 9"><path d="M5 0.5v8L1 4.5z" fill="#000"/></svg>
<div class="a" style="left:721px;top:518px;width:35px;height:17px;background:#f0f0f0;box-shadow: inset -1px -1px 0 #a0a0a0, inset -2px -2px 0 #6a6a6a, inset 1px 1px 0 #fafafa;"></div>
<div class="a" style="left:789px;top:518px;width:16px;height:17px;background:#f0f0f0;box-shadow: inset -1px -1px 0 #a0a0a0, inset -2px -2px 0 #6a6a6a, inset 1px 1px 0 #fafafa;"></div>
<svg class="a" style="left:795px;top:522px" width="6" height="9" viewBox="0 0 6 9"><path d="M1 0.5v8L5 4.5z" fill="#000"/></svg>
<div class="a" style="left:808px;top:517px;width:865px;height:17px;background:#c8c8c8;"></div>
<div class="a" style="left:808px;top:517px;width:865px;height:1px;background:#808080;"></div>
<div class="a" style="left:809px;top:518px;width:15px;height:17px;background:#f0f0f0;box-shadow: inset -1px -1px 0 #a0a0a0, inset -2px -2px 0 #6a6a6a, inset 1px 1px 0 #fafafa;"></div>
<svg class="a" style="left:813px;top:522px" width="6" height="9" viewBox="0 0 6 9"><path d="M5 0.5v8L1 4.5z" fill="#000"/></svg>
<div class="a" style="left:824px;top:518px;width:10px;height:17px;background:#f0f0f0;box-shadow: inset -1px -1px 0 #a0a0a0, inset -2px -2px 0 #6a6a6a, inset 1px 1px 0 #fafafa;"></div>
<div class="a" style="left:824px;top:534px;width:2px;height:1px;background:#ffd000;"></div>
<div class="a" style="left:393px;top:534px;width:1280px;height:2px;background:#fff;"></div>
<div class="a" style="left:393px;top:536px;width:1280px;height:1px;background:#b0b0b0;"></div>
<div class="a" style="left:393px;top:537px;width:1280px;height:1px;background:#fff;"></div>
<div class="a" style="left:808px;top:49px;width:865px;height:20px;background:#000;"></div>
<div class="a" style="left:808px;top:71px;width:865px;height:402px;background:#000;"></div>
<div class="a" style="left:808px;top:475px;width:865px;height:39px;background:#000;"></div>
<div class="a" style="left:808px;top:49px;width:2px;height:20px;background:#ffd000;"></div>
<div class="a" style="left:808px;top:71px;width:2px;height:402px;background:#ffd000;"></div>
<div class="a" style="left:808px;top:475px;width:2px;height:23px;background:#ffd000;"></div>
<div class="a" style="left:808px;top:497px;width:865px;height:1px;background:#909090;"></div>
<div class="a" style="left:393px;top:537px;width:1280px;height:26px;background:#f0f0f0;"></div>
<div class="a" style="left:393px;top:537px;width:1280px;height:2px;background:#fff;"></div>
<div class="a" style="left:392px;top:539px;width:1281px;height:1px;background:#a0a0a0;"></div>
<div class="a" style="left:551px;top:541px;width:1122px;height:2px;background:#111;"></div>
<div class="a" style="left:393px;top:542px;width:86px;height:20px;background:#c8c8c8;border-radius:0 0 0 4px;"></div>
<div class="a" style="left:464px;top:542px;width:15px;height:1px;background:#222;"></div>
<div class="a" style="left:393px;top:542px;width:1px;height:19px;background:#222;"></div>
<div class="a" style="left:393px;top:561px;width:86px;height:2px;background:#222;border-radius:0 0 0 3px;"></div>
<div class="a" style="left:479px;top:542px;width:73px;height:21px;background:#f0f0f0;border:1px solid #222;border-top:none;border-width:0 2px 2px 1px;box-sizing:border-box;border-radius:0 0 4px 4px;"></div>
<svg class="a" style="left:394px;top:541px" width="20" height="19" viewBox="0 0 20 19"><rect x="3" y="1" width="15" height="15" fill="#fff"/><rect x="17" y="2" width="2" height="15" fill="#000"/><rect x="4" y="16" width="15" height="2" fill="#000"/><rect x="5" y="2.5" width="12" height="12.5" fill="#0a28a0"/><path d="M5.5 6.5h3v6h-3M8.5 9.5h3v-2h5.5M16.5 12.5h-2v2.5" stroke="#00f0ff" stroke-width="1.6" fill="none"/><rect x="10.5" y="10" width="1.4" height="5" fill="#ff1010"/><path d="M11.5 2.5v2l-1 1" stroke="#f8f000" stroke-width="1.3" fill="none"/><circle cx="16" cy="3.5" r="1" fill="#f8f000"/></svg>
<div class="t" style="left:416px;top:543px;color:#000;font-size:11px;font-family:'Liberation Sans', sans-serif;">Dataflow</div>
<svg class="a" style="left:466px;top:547px" width="9" height="9" viewBox="0 0 9 9"><path d="M1 1l7 7M8 1l-7 7" stroke="#a8a8a8" stroke-width="2"/></svg>
<svg class="a" style="left:482px;top:541px" width="20" height="20" viewBox="0 0 20 20"><rect x="1" y="2" width="16" height="16" fill="#fff"/><rect x="16" y="3" width="2" height="16" fill="#000"/><rect x="2" y="17" width="16" height="2" fill="#000"/><rect x="2" y="3" width="14" height="14" fill="#c8c8c8"/><rect x="3" y="4" width="12" height="2.5" fill="#fff"/><rect x="3" y="8" width="12" height="8" fill="#000"/><path d="M3 9.8h2.5v1.8h3V9.8h3v1.8H15M3 13.2h3v2.5h2.5v-1.5H9" stroke="#10a040" stroke-width="1.2" fill="none"/><rect x="7" y="8" width="1" height="8" fill="#30e8f8"/><rect x="10" y="14" width="5" height="1.3" fill="#5010e0"/></svg>
<div class="t" style="left:503px;top:543px;color:#000;font-size:11px;font-family:'Liberation Sans', sans-serif;">Wave</div>
<svg class="a" style="left:538px;top:547px" width="9" height="9" viewBox="0 0 9 9"><path d="M1 1l7 7M8 1l-7 7" stroke="#b8b8b8" stroke-width="2"/></svg>
<svg class="a" style="left:0;top:0" width="1673" height="836" shape-rendering="crispEdges"><rect x="873" y="71" width="1" height="402" fill="#808080"/><rect x="939" y="71" width="1" height="402" fill="#808080"/><rect x="1005" y="71" width="1" height="402" fill="#808080"/><rect x="1071" y="71" width="1" height="402" fill="#808080"/><rect x="1137" y="71" width="1" height="402" fill="#808080"/><rect x="1203" y="71" width="1" height="402" fill="#808080"/><rect x="1269" y="71" width="1" height="402" fill="#808080"/><rect x="1335" y="71" width="1" height="402" fill="#808080"/><rect x="1400" y="71" width="1" height="402" fill="#808080"/><rect x="1466" y="71" width="1" height="402" fill="#808080"/><rect x="1532" y="71" width="1" height="402" fill="#808080"/><rect x="1598" y="71" width="1" height="402" fill="#808080"/><rect x="1664" y="71" width="1" height="402" fill="#808080"/><rect x="808" y="87" width="66" height="1" fill="#00ff00"/><rect x="873" y="75" width="67" height="1" fill="#00ff00"/><rect x="873" y="75" width="1" height="13" fill="#00ff00"/><rect x="939" y="87" width="67" height="1" fill="#00ff00"/><rect x="939" y="75" width="1" height="13" fill="#00ff00"/><rect x="1005" y="75" width="67" height="1" fill="#00ff00"/><rect x="1005" y="75" width="1" height="13" fill="#00ff00"/><rect x="1071" y="87" width="67" height="1" fill="#00ff00"/><rect x="1071" y="75" width="1" height="13" fill="#00ff00"/><rect x="1137" y="75" width="67" height="1" fill="#00ff00"/><rect x="1137" y="75" width="1" height="13" fill="#00ff00"/><rect x="1203" y="87" width="67" height="1" fill="#00ff00"/><rect x="1203" y="75" width="1" height="13" fill="#00ff00"/><rect x="1269" y="75" width="67" height="1" fill="#00ff00"/><rect x="1269" y="75" width="1" height="13" fill="#00ff00"/><rect x="1335" y="87" width="66" height="1" fill="#00ff00"/><rect x="1335" y="75" width="1" height="13" fill="#00ff00"/><rect x="1400" y="75" width="67" height="1" fill="#00ff00"/><rect x="1400" y="75" width="1" height="13" fill="#00ff00"/><rect x="1466" y="87" width="67" height="1" fill="#00ff00"/><rect x="1466" y="75" width="1" height="13" fill="#00ff00"/><rect x="1532" y="75" width="67" height="1" fill="#00ff00"/><rect x="1532" y="75" width="1" height="13" fill="#00ff00"/><rect x="1598" y="87" width="67" height="1" fill="#00ff00"/><rect x="1598" y="75" width="1" height="13" fill="#00ff00"/><rect x="1664" y="75" width="10" height="1" fill="#00ff00"/><rect x="1664" y="75" width="1" height="13" fill="#00ff00"/><rect x="808" y="82" width="1" height="5" fill="#ff0000"/><rect x="809" y="92" width="63" height="1" fill="#b4f0b4"/><rect x="809" y="104" width="63" height="1" fill="#b4f0b4"/><rect x="808" y="93" width="1" height="11" fill="#3030ff"/><rect x="872" y="93" width="1" height="5" fill="#b4f0b4"/><rect x="872" y="99" width="1" height="5" fill="#b4f0b4"/><rect x="873" y="98" width="1" height="1" fill="#b4f0b4"/><rect x="875" y="92" width="129" height="1" fill="#b4f0b4"/><rect x="875" y="104" width="129" height="1" fill="#b4f0b4"/><rect x="874" y="93" width="1" height="5" fill="#b4f0b4"/><rect x="874" y="99" width="1" height="5" fill="#b4f0b4"/><rect x="873" y="98" width="1" height="1" fill="#b4f0b4"/><rect x="1004" y="93" width="1" height="5" fill="#b4f0b4"/><rect x="1004" y="99" width="1" height="5" fill="#b4f0b4"/><rect x="1005" y="98" width="1" height="1" fill="#b4f0b4"/><rect x="1007" y="92" width="129" height="1" fill="#b4f0b4"/><rect x="1007" y="104" width="129" height="1" fill="#b4f0b4"/><rect x="1006" y="93" width="1" height="5" fill="#b4f0b4"/><rect x="1006" y="99" width="1" height="5" fill="#b4f0b4"/><rect x="1005" y="98" width="1" height="1" fill="#b4f0b4"/><rect x="1136" y="93" width="1" height="5" fill="#b4f0b4"/><rect x="1136" y="99" width="1" height="5" fill="#b4f0b4"/><rect x="1137" y="98" width="1" height="1" fill="#b4f0b4"/><rect x="1139" y="92" width="129" height="1" fill="#b4f0b4"/><rect x="1139" y="104" width="129" height="1" fill="#b4f0b4"/><rect x="1138" y="93" width="1" height="5" fill="#b4f0b4"/><rect x="1138" y="99" width="1" height="5" fill="#b4f0b4"/><rect x="1137" y="98" width="1" height="1" fill="#b4f0b4"/><rect x="1268" y="93" width="1" height="5" fill="#b4f0b4"/><rect x="1268" y="99" width="1" height="5" fill="#b4f0b4"/><rect x="1269" y="98" width="1" height="1" fill="#b4f0b4"/><rect x="1271" y="92" width="128" height="1" fill="#b4f0b4"/><rect x="1271" y="104" width="128" height="1" fill="#b4f0b4"/><rect x="1270" y="93" width="1" height="5" fill="#b4f0b4"/><rect x="1270" y="99" width="1" height="5" fill="#b4f0b4"/><rect x="1269" y="98" width="1" height="1" fill="#b4f0b4"/><rect x="1399" y="93" width="1" height="5" fill="#b4f0b4"/><rect x="1399" y="99" width="1" height="5" fill="#b4f0b4"/><rect x="1400" y="98" width="1" height="1" fill="#b4f0b4"/><rect x="1402" y="92" width="129" height="1" fill="#b4f0b4"/><rect x="1402" y="104" width="129" height="1" fill="#b4f0b4"/><rect x="1401" y="93" width="1" height="5" fill="#b4f0b4"/><rect x="1401" y="99" width="1" height="5" fill="#b4f0b4"/><rect x="1400" y="98" width="1" height="1" fill="#b4f0b4"/><rect x="1531" y="93" width="1" height="5" fill="#b4f0b4"/><rect x="1531" y="99" width="1" height="5" fill="#b4f0b4"/><rect x="1532" y="98" width="1" height="1" fill="#b4f0b4"/><rect x="1534" y="92" width="129" height="1" fill="#b4f0b4"/><rect x="1534" y="104" width="129" height="1" fill="#b4f0b4"/><rect x="1533" y="93" width="1" height="5" fill="#b4f0b4"/><rect x="1533" y="99" width="1" height="5" fill="#b4f0b4"/><rect x="1532" y="98" width="1" height="1" fill="#b4f0b4"/><rect x="1663" y="93" width="1" height="5" fill="#b4f0b4"/><rect x="1663" y="99" width="1" height="5" fill="#b4f0b4"/><rect x="1664" y="98" width="1" height="1" fill="#b4f0b4"/><rect x="1666" y="92" width="11" height="1" fill="#b4f0b4"/><rect x="1666" y="104" width="11" height="1" fill="#b4f0b4"/><rect x="1665" y="93" width="1" height="5" fill="#b4f0b4"/><rect x="1665" y="99" width="1" height="5" fill="#b4f0b4"/><rect x="1664" y="98" width="1" height="1" fill="#b4f0b4"/><rect x="809" y="109" width="63" height="1" fill="#b4f0b4"/><rect x="809" y="121" width="63" height="1" fill="#b4f0b4"/><rect x="808" y="110" width="1" height="11" fill="#3030ff"/><rect x="872" y="110" width="1" height="5" fill="#b4f0b4"/><rect x="872" y="116" width="1" height="5" fill="#b4f0b4"/><rect x="873" y="115" width="1" height="1" fill="#b4f0b4"/><rect x="875" y="109" width="129" height="1" fill="#b4f0b4"/><rect x="875" y="121" width="129" height="1" fill="#b4f0b4"/><rect x="874" y="110" width="1" height="5" fill="#b4f0b4"/><rect x="874" y="116" width="1" height="5" fill="#b4f0b4"/><rect x="873" y="115" width="1" height="1" fill="#b4f0b4"/><rect x="1004" y="110" width="1" height="5" fill="#b4f0b4"/><rect x="1004" y="116" width="1" height="5" fill="#b4f0b4"/><rect x="1005" y="115" width="1" height="1" fill="#b4f0b4"/><rect x="1007" y="109" width="129" height="1" fill="#b4f0b4"/><rect x="1007" y="121" width="129" height="1" fill="#b4f0b4"/><rect x="1006" y="110" width="1" height="5" fill="#b4f0b4"/><rect x="1006" y="116" width="1" height="5" fill="#b4f0b4"/><rect x="1005" y="115" width="1" height="1" fill="#b4f0b4"/><rect x="1136" y="110" width="1" height="5" fill="#b4f0b4"/><rect x="1136" y="116" width="1" height="5" fill="#b4f0b4"/><rect x="1137" y="115" width="1" height="1" fill="#b4f0b4"/><rect x="1139" y="109" width="129" height="1" fill="#b4f0b4"/><rect x="1139" y="121" width="129" height="1" fill="#b4f0b4"/><rect x="1138" y="110" width="1" height="5" fill="#b4f0b4"/><rect x="1138" y="116" width="1" height="5" fill="#b4f0b4"/><rect x="1137" y="115" width="1" height="1" fill="#b4f0b4"/><rect x="1268" y="110" width="1" height="5" fill="#b4f0b4"/><rect x="1268" y="116" width="1" height="5" fill="#b4f0b4"/><rect x="1269" y="115" width="1" height="1" fill="#b4f0b4"/><rect x="1270" y="115" width="404" height="1" fill="#ff0000"/><rect x="809" y="126" width="868" height="1" fill="#b4f0b4"/><rect x="809" y="138" width="868" height="1" fill="#b4f0b4"/><rect x="808" y="127" width="1" height="11" fill="#3030ff"/><rect x="809" y="143" width="63" height="1" fill="#b4f0b4"/><rect x="809" y="155" width="63" height="1" fill="#b4f0b4"/><rect x="808" y="144" width="1" height="11" fill="#3030ff"/><rect x="872" y="144" width="1" height="5" fill="#b4f0b4"/><rect x="872" y="150" width="1" height="5" fill="#b4f0b4"/><rect x="873" y="149" width="1" height="1" fill="#b4f0b4"/><rect x="875" y="143" width="129" height="1" fill="#b4f0b4"/><rect x="875" y="155" width="129" height="1" fill="#b4f0b4"/><rect x="874" y="144" width="1" height="5" fill="#b4f0b4"/><rect x="874" y="150" width="1" height="5" fill="#b4f0b4"/><rect x="873" y="149" width="1" height="1" fill="#b4f0b4"/><rect x="1004" y="144" width="1" height="5" fill="#b4f0b4"/><rect x="1004" y="150" width="1" height="5" fill="#b4f0b4"/><rect x="1005" y="149" width="1" height="1" fill="#b4f0b4"/><rect x="1007" y="143" width="129" height="1" fill="#b4f0b4"/><rect x="1007" y="155" width="129" height="1" fill="#b4f0b4"/><rect x="1006" y="144" width="1" height="5" fill="#b4f0b4"/><rect x="1006" y="150" width="1" height="5" fill="#b4f0b4"/><rect x="1005" y="149" width="1" height="1" fill="#b4f0b4"/><rect x="1136" y="144" width="1" height="5" fill="#b4f0b4"/><rect x="1136" y="150" width="1" height="5" fill="#b4f0b4"/><rect x="1137" y="149" width="1" height="1" fill="#b4f0b4"/><rect x="1139" y="143" width="129" height="1" fill="#b4f0b4"/><rect x="1139" y="155" width="129" height="1" fill="#b4f0b4"/><rect x="1138" y="144" width="1" height="5" fill="#b4f0b4"/><rect x="1138" y="150" width="1" height="5" fill="#b4f0b4"/><rect x="1137" y="149" width="1" height="1" fill="#b4f0b4"/><rect x="1268" y="144" width="1" height="5" fill="#b4f0b4"/><rect x="1268" y="150" width="1" height="5" fill="#b4f0b4"/><rect x="1269" y="149" width="1" height="1" fill="#b4f0b4"/><rect x="1270" y="149" width="404" height="1" fill="#ff0000"/><rect x="809" y="160" width="63" height="1" fill="#b4f0b4"/><rect x="809" y="172" width="63" height="1" fill="#b4f0b4"/><rect x="808" y="161" width="1" height="11" fill="#3030ff"/><rect x="872" y="161" width="1" height="5" fill="#b4f0b4"/><rect x="872" y="167" width="1" height="5" fill="#b4f0b4"/><rect x="873" y="166" width="1" height="1" fill="#b4f0b4"/><rect x="875" y="160" width="261" height="1" fill="#b4f0b4"/><rect x="875" y="172" width="261" height="1" fill="#b4f0b4"/><rect x="874" y="161" width="1" height="5" fill="#b4f0b4"/><rect x="874" y="167" width="1" height="5" fill="#b4f0b4"/><rect x="873" y="166" width="1" height="1" fill="#b4f0b4"/><rect x="1136" y="161" width="1" height="5" fill="#b4f0b4"/><rect x="1136" y="167" width="1" height="5" fill="#b4f0b4"/><rect x="1137" y="166" width="1" height="1" fill="#b4f0b4"/><rect x="1139" y="160" width="129" height="1" fill="#b4f0b4"/><rect x="1139" y="172" width="129" height="1" fill="#b4f0b4"/><rect x="1138" y="161" width="1" height="5" fill="#b4f0b4"/><rect x="1138" y="167" width="1" height="5" fill="#b4f0b4"/><rect x="1137" y="166" width="1" height="1" fill="#b4f0b4"/><rect x="1268" y="161" width="1" height="5" fill="#b4f0b4"/><rect x="1268" y="167" width="1" height="5" fill="#b4f0b4"/><rect x="1269" y="166" width="1" height="1" fill="#b4f0b4"/><rect x="1270" y="166" width="404" height="1" fill="#ff0000"/><rect x="809" y="177" width="868" height="1" fill="#b4f0b4"/><rect x="809" y="189" width="868" height="1" fill="#b4f0b4"/><rect x="808" y="178" width="1" height="11" fill="#3030ff"/><rect x="809" y="194" width="868" height="1" fill="#b4f0b4"/><rect x="809" y="206" width="868" height="1" fill="#b4f0b4"/><rect x="808" y="195" width="1" height="11" fill="#3030ff"/><rect x="808" y="217" width="866" height="1" fill="#ff0000"/><rect x="808" y="234" width="66" height="1" fill="#ff0000"/><rect x="875" y="228" width="129" height="1" fill="#b4f0b4"/><rect x="875" y="240" width="129" height="1" fill="#b4f0b4"/><rect x="874" y="229" width="1" height="5" fill="#b4f0b4"/><rect x="874" y="235" width="1" height="5" fill="#b4f0b4"/><rect x="873" y="234" width="1" height="1" fill="#b4f0b4"/><rect x="1004" y="229" width="1" height="5" fill="#b4f0b4"/><rect x="1004" y="235" width="1" height="5" fill="#b4f0b4"/><rect x="1005" y="234" width="1" height="1" fill="#b4f0b4"/><rect x="1007" y="228" width="129" height="1" fill="#b4f0b4"/><rect x="1007" y="240" width="129" height="1" fill="#b4f0b4"/><rect x="1006" y="229" width="1" height="5" fill="#b4f0b4"/><rect x="1006" y="235" width="1" height="5" fill="#b4f0b4"/><rect x="1005" y="234" width="1" height="1" fill="#b4f0b4"/><rect x="1136" y="229" width="1" height="5" fill="#b4f0b4"/><rect x="1136" y="235" width="1" height="5" fill="#b4f0b4"/><rect x="1137" y="234" width="1" height="1" fill="#b4f0b4"/><rect x="1139" y="228" width="129" height="1" fill="#b4f0b4"/><rect x="1139" y="240" width="129" height="1" fill="#b4f0b4"/><rect x="1138" y="229" width="1" height="5" fill="#b4f0b4"/><rect x="1138" y="235" width="1" height="5" fill="#b4f0b4"/><rect x="1137" y="234" width="1" height="1" fill="#b4f0b4"/><rect x="1268" y="229" width="1" height="5" fill="#b4f0b4"/><rect x="1268" y="235" width="1" height="5" fill="#b4f0b4"/><rect x="1269" y="234" width="1" height="1" fill="#b4f0b4"/><rect x="1270" y="234" width="404" height="1" fill="#ff0000"/><rect x="809" y="245" width="63" height="1" fill="#b4f0b4"/><rect x="809" y="257" width="63" height="1" fill="#b4f0b4"/><rect x="808" y="246" width="1" height="11" fill="#3030ff"/><rect x="872" y="246" width="1" height="5" fill="#b4f0b4"/><rect x="872" y="252" width="1" height="5" fill="#b4f0b4"/><rect x="873" y="251" width="1" height="1" fill="#b4f0b4"/><rect x="875" y="245" width="129" height="1" fill="#b4f0b4"/><rect x="875" y="257" width="129" height="1" fill="#b4f0b4"/><rect x="874" y="246" width="1" height="5" fill="#b4f0b4"/><rect x="874" y="252" width="1" height="5" fill="#b4f0b4"/><rect x="873" y="251" width="1" height="1" fill="#b4f0b4"/><rect x="1004" y="246" width="1" height="5" fill="#b4f0b4"/><rect x="1004" y="252" width="1" height="5" fill="#b4f0b4"/><rect x="1005" y="251" width="1" height="1" fill="#b4f0b4"/><rect x="1007" y="245" width="129" height="1" fill="#b4f0b4"/><rect x="1007" y="257" width="129" height="1" fill="#b4f0b4"/><rect x="1006" y="246" width="1" height="5" fill="#b4f0b4"/><rect x="1006" y="252" width="1" height="5" fill="#b4f0b4"/><rect x="1005" y="251" width="1" height="1" fill="#b4f0b4"/><rect x="1136" y="246" width="1" height="5" fill="#b4f0b4"/><rect x="1136" y="252" width="1" height="5" fill="#b4f0b4"/><rect x="1137" y="251" width="1" height="1" fill="#b4f0b4"/><rect x="1139" y="245" width="129" height="1" fill="#b4f0b4"/><rect x="1139" y="257" width="129" height="1" fill="#b4f0b4"/><rect x="1138" y="246" width="1" height="5" fill="#b4f0b4"/><rect x="1138" y="252" width="1" height="5" fill="#b4f0b4"/><rect x="1137" y="251" width="1" height="1" fill="#b4f0b4"/><rect x="1268" y="246" width="1" height="5" fill="#b4f0b4"/><rect x="1268" y="252" width="1" height="5" fill="#b4f0b4"/><rect x="1269" y="251" width="1" height="1" fill="#b4f0b4"/><rect x="1270" y="251" width="404" height="1" fill="#ff0000"/><rect x="808" y="262" width="462" height="1" fill="#00ff00"/><rect x="1269" y="274" width="405" height="1" fill="#00ff00"/><rect x="1269" y="262" width="1" height="13" fill="#00ff00"/><rect x="808" y="279" width="198" height="1" fill="#00ff00"/><rect x="1005" y="291" width="133" height="1" fill="#00ff00"/><rect x="1005" y="279" width="1" height="13" fill="#00ff00"/><rect x="1137" y="279" width="133" height="1" fill="#00ff00"/><rect x="1137" y="279" width="1" height="13" fill="#00ff00"/><rect x="1269" y="291" width="405" height="1" fill="#00ff00"/><rect x="1269" y="279" width="1" height="13" fill="#00ff00"/><rect x="808" y="296" width="66" height="1" fill="#00ff00"/><rect x="873" y="308" width="801" height="1" fill="#00ff00"/><rect x="873" y="296" width="1" height="13" fill="#00ff00"/><rect x="808" y="325" width="330" height="1" fill="#00ff00"/><rect x="1137" y="313" width="133" height="1" fill="#00ff00"/><rect x="1137" y="313" width="1" height="13" fill="#00ff00"/><rect x="1269" y="325" width="405" height="1" fill="#00ff00"/><rect x="1269" y="313" width="1" height="13" fill="#00ff00"/><rect x="808" y="342" width="866" height="1" fill="#00ff00"/><rect x="808" y="353" width="198" height="1" fill="#ff0000"/><rect x="1005" y="347" width="133" height="1" fill="#00ff00"/><rect x="1005" y="347" width="1" height="7" fill="#00ff00"/><rect x="1137" y="353" width="537" height="1" fill="#ff0000"/><rect x="1137" y="347" width="1" height="7" fill="#ff0000"/><rect x="808" y="269" width="1" height="5" fill="#ff0000"/><rect x="808" y="286" width="1" height="5" fill="#ff0000"/><rect x="808" y="303" width="1" height="5" fill="#ff0000"/><rect x="808" y="320" width="1" height="5" fill="#ff0000"/><rect x="808" y="337" width="1" height="5" fill="#ff0000"/><rect x="809" y="364" width="63" height="1" fill="#b4f0b4"/><rect x="809" y="376" width="63" height="1" fill="#b4f0b4"/><rect x="808" y="365" width="1" height="11" fill="#3030ff"/><rect x="872" y="365" width="1" height="5" fill="#b4f0b4"/><rect x="872" y="371" width="1" height="5" fill="#b4f0b4"/><rect x="873" y="370" width="1" height="1" fill="#b4f0b4"/><rect x="875" y="364" width="129" height="1" fill="#b4f0b4"/><rect x="875" y="376" width="129" height="1" fill="#b4f0b4"/><rect x="874" y="365" width="1" height="5" fill="#b4f0b4"/><rect x="874" y="371" width="1" height="5" fill="#b4f0b4"/><rect x="873" y="370" width="1" height="1" fill="#b4f0b4"/><rect x="1004" y="365" width="1" height="5" fill="#b4f0b4"/><rect x="1004" y="371" width="1" height="5" fill="#b4f0b4"/><rect x="1005" y="370" width="1" height="1" fill="#b4f0b4"/><rect x="1007" y="364" width="129" height="1" fill="#b4f0b4"/><rect x="1007" y="376" width="129" height="1" fill="#b4f0b4"/><rect x="1006" y="365" width="1" height="5" fill="#b4f0b4"/><rect x="1006" y="371" width="1" height="5" fill="#b4f0b4"/><rect x="1005" y="370" width="1" height="1" fill="#b4f0b4"/><rect x="1136" y="365" width="1" height="5" fill="#b4f0b4"/><rect x="1136" y="371" width="1" height="5" fill="#b4f0b4"/><rect x="1137" y="370" width="1" height="1" fill="#b4f0b4"/><rect x="1139" y="364" width="538" height="1" fill="#b4f0b4"/><rect x="1139" y="376" width="538" height="1" fill="#b4f0b4"/><rect x="1138" y="365" width="1" height="5" fill="#b4f0b4"/><rect x="1138" y="371" width="1" height="5" fill="#b4f0b4"/><rect x="1137" y="370" width="1" height="1" fill="#b4f0b4"/><rect x="809" y="381" width="63" height="1" fill="#b4f0b4"/><rect x="809" y="393" width="63" height="1" fill="#b4f0b4"/><rect x="808" y="382" width="1" height="11" fill="#3030ff"/><rect x="872" y="382" width="1" height="5" fill="#b4f0b4"/><rect x="872" y="388" width="1" height="5" fill="#b4f0b4"/><rect x="873" y="387" width="1" height="1" fill="#b4f0b4"/><rect x="875" y="381" width="129" height="1" fill="#b4f0b4"/><rect x="875" y="393" width="129" height="1" fill="#b4f0b4"/><rect x="874" y="382" width="1" height="5" fill="#b4f0b4"/><rect x="874" y="388" width="1" height="5" fill="#b4f0b4"/><rect x="873" y="387" width="1" height="1" fill="#b4f0b4"/><rect x="1004" y="382" width="1" height="5" fill="#b4f0b4"/><rect x="1004" y="388" width="1" height="5" fill="#b4f0b4"/><rect x="1005" y="387" width="1" height="1" fill="#b4f0b4"/><rect x="1007" y="381" width="129" height="1" fill="#b4f0b4"/><rect x="1007" y="393" width="129" height="1" fill="#b4f0b4"/><rect x="1006" y="382" width="1" height="5" fill="#b4f0b4"/><rect x="1006" y="388" width="1" height="5" fill="#b4f0b4"/><rect x="1005" y="387" width="1" height="1" fill="#b4f0b4"/><rect x="1136" y="382" width="1" height="5" fill="#b4f0b4"/><rect x="1136" y="388" width="1" height="5" fill="#b4f0b4"/><rect x="1137" y="387" width="1" height="1" fill="#b4f0b4"/><rect x="1139" y="381" width="538" height="1" fill="#b4f0b4"/><rect x="1139" y="393" width="538" height="1" fill="#b4f0b4"/><rect x="1138" y="382" width="1" height="5" fill="#b4f0b4"/><rect x="1138" y="388" width="1" height="5" fill="#b4f0b4"/><rect x="1137" y="387" width="1" height="1" fill="#b4f0b4"/><rect x="809" y="398" width="63" height="1" fill="#b4f0b4"/><rect x="809" y="410" width="63" height="1" fill="#b4f0b4"/><rect x="808" y="399" width="1" height="11" fill="#3030ff"/><rect x="872" y="399" width="1" height="5" fill="#b4f0b4"/><rect x="872" y="405" width="1" height="5" fill="#b4f0b4"/><rect x="873" y="404" width="1" height="1" fill="#b4f0b4"/><rect x="875" y="398" width="261" height="1" fill="#b4f0b4"/><rect x="875" y="410" width="261" height="1" fill="#b4f0b4"/><rect x="874" y="399" width="1" height="5" fill="#b4f0b4"/><rect x="874" y="405" width="1" height="5" fill="#b4f0b4"/><rect x="873" y="404" width="1" height="1" fill="#b4f0b4"/><rect x="1136" y="399" width="1" height="5" fill="#b4f0b4"/><rect x="1136" y="405" width="1" height="5" fill="#b4f0b4"/><rect x="1137" y="404" width="1" height="1" fill="#b4f0b4"/><rect x="1139" y="398" width="538" height="1" fill="#b4f0b4"/><rect x="1139" y="410" width="538" height="1" fill="#b4f0b4"/><rect x="1138" y="399" width="1" height="5" fill="#b4f0b4"/><rect x="1138" y="405" width="1" height="5" fill="#b4f0b4"/><rect x="1137" y="404" width="1" height="1" fill="#b4f0b4"/><rect x="808" y="421" width="866" height="1" fill="#ff0000"/></svg>
<svg class="a" style="left:0;top:0" width="1673" height="836" shape-rendering="crispEdges"><rect x="815" y="478" width="1" height="4" fill="#00e000"/><rect x="821" y="478" width="1" height="4" fill="#00e000"/><rect x="828" y="478" width="1" height="4" fill="#00e000"/><rect x="834" y="478" width="1" height="4" fill="#00e000"/><rect x="840" y="475" width="1" height="7" fill="#00e000"/><rect x="847" y="478" width="1" height="4" fill="#00e000"/><rect x="853" y="478" width="1" height="4" fill="#00e000"/><rect x="860" y="478" width="1" height="4" fill="#00e000"/><rect x="866" y="478" width="1" height="4" fill="#00e000"/><rect x="873" y="475" width="1" height="7" fill="#00e000"/><rect x="880" y="478" width="1" height="4" fill="#00e000"/><rect x="886" y="478" width="1" height="4" fill="#00e000"/><rect x="893" y="478" width="1" height="4" fill="#00e000"/><rect x="899" y="478" width="1" height="4" fill="#00e000"/><rect x="906" y="475" width="1" height="7" fill="#00e000"/><rect x="913" y="478" width="1" height="4" fill="#00e000"/><rect x="919" y="478" width="1" height="4" fill="#00e000"/><rect x="926" y="478" width="1" height="4" fill="#00e000"/><rect x="932" y="478" width="1" height="4" fill="#00e000"/><rect x="939" y="475" width="1" height="7" fill="#00e000"/><rect x="946" y="478" width="1" height="4" fill="#00e000"/><rect x="952" y="478" width="1" height="4" fill="#00e000"/><rect x="959" y="478" width="1" height="4" fill="#00e000"/><rect x="965" y="478" width="1" height="4" fill="#00e000"/><rect x="972" y="475" width="1" height="7" fill="#00e000"/><rect x="979" y="478" width="1" height="4" fill="#00e000"/><rect x="985" y="478" width="1" height="4" fill="#00e000"/><rect x="992" y="478" width="1" height="4" fill="#00e000"/><rect x="998" y="478" width="1" height="4" fill="#00e000"/><rect x="1005" y="475" width="1" height="7" fill="#00e000"/><rect x="1012" y="478" width="1" height="4" fill="#00e000"/><rect x="1018" y="478" width="1" height="4" fill="#00e000"/><rect x="1025" y="478" width="1" height="4" fill="#00e000"/><rect x="1031" y="478" width="1" height="4" fill="#00e000"/><rect x="1038" y="475" width="1" height="7" fill="#00e000"/><rect x="1045" y="478" width="1" height="4" fill="#00e000"/><rect x="1051" y="478" width="1" height="4" fill="#00e000"/><rect x="1058" y="478" width="1" height="4" fill="#00e000"/><rect x="1064" y="478" width="1" height="4" fill="#00e000"/><rect x="1071" y="475" width="1" height="7" fill="#00e000"/><rect x="1078" y="478" width="1" height="4" fill="#00e000"/><rect x="1084" y="478" width="1" height="4" fill="#00e000"/><rect x="1091" y="478" width="1" height="4" fill="#00e000"/><rect x="1097" y="478" width="1" height="4" fill="#00e000"/><rect x="1104" y="475" width="1" height="7" fill="#00e000"/><rect x="1111" y="478" width="1" height="4" fill="#00e000"/><rect x="1117" y="478" width="1" height="4" fill="#00e000"/><rect x="1124" y="478" width="1" height="4" fill="#00e000"/><rect x="1130" y="478" width="1" height="4" fill="#00e000"/><rect x="1137" y="475" width="1" height="7" fill="#00e000"/><rect x="1144" y="478" width="1" height="4" fill="#00e000"/><rect x="1150" y="478" width="1" height="4" fill="#00e000"/><rect x="1157" y="478" width="1" height="4" fill="#00e000"/><rect x="1163" y="478" width="1" height="4" fill="#00e000"/><rect x="1170" y="475" width="1" height="7" fill="#00e000"/><rect x="1177" y="478" width="1" height="4" fill="#00e000"/><rect x="1183" y="478" width="1" height="4" fill="#00e000"/><rect x="1190" y="478" width="1" height="4" fill="#00e000"/><rect x="1196" y="478" width="1" height="4" fill="#00e000"/><rect x="1203" y="475" width="1" height="7" fill="#00e000"/><rect x="1210" y="478" width="1" height="4" fill="#00e000"/><rect x="1216" y="478" width="1" height="4" fill="#00e000"/><rect x="1223" y="478" width="1" height="4" fill="#00e000"/><rect x="1229" y="478" width="1" height="4" fill="#00e000"/><rect x="1236" y="475" width="1" height="7" fill="#00e000"/><rect x="1243" y="478" width="1" height="4" fill="#00e000"/><rect x="1249" y="478" width="1" height="4" fill="#00e000"/><rect x="1256" y="478" width="1" height="4" fill="#00e000"/><rect x="1262" y="478" width="1" height="4" fill="#00e000"/><rect x="1269" y="475" width="1" height="7" fill="#00e000"/><rect x="1276" y="478" width="1" height="4" fill="#00e000"/><rect x="1282" y="478" width="1" height="4" fill="#00e000"/><rect x="1289" y="478" width="1" height="4" fill="#00e000"/><rect x="1295" y="478" width="1" height="4" fill="#00e000"/><rect x="1302" y="475" width="1" height="7" fill="#00e000"/><rect x="1309" y="478" width="1" height="4" fill="#00e000"/><rect x="1315" y="478" width="1" height="4" fill="#00e000"/><rect x="1322" y="478" width="1" height="4" fill="#00e000"/><rect x="1328" y="478" width="1" height="4" fill="#00e000"/><rect x="1335" y="475" width="1" height="7" fill="#00e000"/><rect x="1342" y="478" width="1" height="4" fill="#00e000"/><rect x="1348" y="478" width="1" height="4" fill="#00e000"/><rect x="1355" y="478" width="1" height="4" fill="#00e000"/><rect x="1361" y="478" width="1" height="4" fill="#00e000"/><rect x="1367" y="475" width="1" height="7" fill="#00e000"/><rect x="1374" y="478" width="1" height="4" fill="#00e000"/><rect x="1380" y="478" width="1" height="4" fill="#00e000"/><rect x="1387" y="478" width="1" height="4" fill="#00e000"/><rect x="1393" y="478" width="1" height="4" fill="#00e000"/><rect x="1400" y="475" width="1" height="7" fill="#00e000"/><rect x="1407" y="478" width="1" height="4" fill="#00e000"/><rect x="1413" y="478" width="1" height="4" fill="#00e000"/><rect x="1420" y="478" width="1" height="4" fill="#00e000"/><rect x="1426" y="478" width="1" height="4" fill="#00e000"/><rect x="1433" y="475" width="1" height="7" fill="#00e000"/><rect x="1440" y="478" width="1" height="4" fill="#00e000"/><rect x="1446" y="478" width="1" height="4" fill="#00e000"/><rect x="1453" y="478" width="1" height="4" fill="#00e000"/><rect x="1459" y="478" width="1" height="4" fill="#00e000"/><rect x="1466" y="475" width="1" height="7" fill="#00e000"/><rect x="1473" y="478" width="1" height="4" fill="#00e000"/><rect x="1479" y="478" width="1" height="4" fill="#00e000"/><rect x="1486" y="478" width="1" height="4" fill="#00e000"/><rect x="1492" y="478" width="1" height="4" fill="#00e000"/><rect x="1499" y="475" width="1" height="7" fill="#00e000"/><rect x="1506" y="478" width="1" height="4" fill="#00e000"/><rect x="1512" y="478" width="1" height="4" fill="#00e000"/><rect x="1519" y="478" width="1" height="4" fill="#00e000"/><rect x="1525" y="478" width="1" height="4" fill="#00e000"/><rect x="1532" y="475" width="1" height="7" fill="#00e000"/><rect x="1539" y="478" width="1" height="4" fill="#00e000"/><rect x="1545" y="478" width="1" height="4" fill="#00e000"/><rect x="1552" y="478" width="1" height="4" fill="#00e000"/><rect x="1558" y="478" width="1" height="4" fill="#00e000"/><rect x="1565" y="475" width="1" height="7" fill="#00e000"/><rect x="1572" y="478" width="1" height="4" fill="#00e000"/><rect x="1578" y="478" width="1" height="4" fill="#00e000"/><rect x="1585" y="478" width="1" height="4" fill="#00e000"/><rect x="1591" y="478" width="1" height="4" fill="#00e000"/><rect x="1598" y="475" width="1" height="7" fill="#00e000"/><rect x="1605" y="478" width="1" height="4" fill="#00e000"/><rect x="1611" y="478" width="1" height="4" fill="#00e000"/><rect x="1618" y="478" width="1" height="4" fill="#00e000"/><rect x="1624" y="478" width="1" height="4" fill="#00e000"/><rect x="1631" y="475" width="1" height="7" fill="#00e000"/><rect x="1638" y="478" width="1" height="4" fill="#00e000"/><rect x="1644" y="478" width="1" height="4" fill="#00e000"/><rect x="1651" y="478" width="1" height="4" fill="#00e000"/><rect x="1657" y="478" width="1" height="4" fill="#00e000"/><rect x="1664" y="475" width="1" height="7" fill="#00e000"/><rect x="1671" y="478" width="1" height="4" fill="#00e000"/></svg>
<div class="a" style="left:810px;top:483px;width:863px;height:14px;overflow:hidden;"><div class="t" style="left:-42px;top:0px;width:80px;text-align:center;color:#00ff00;font-size:11px;">0 ps</div><div class="t" style="left:23px;top:0px;width:80px;text-align:center;color:#00ff00;font-size:11px;">50 ps</div><div class="t" style="left:89px;top:0px;width:80px;text-align:center;color:#00ff00;font-size:11px;">100 ps</div><div class="t" style="left:155px;top:0px;width:80px;text-align:center;color:#00ff00;font-size:11px;">150 ps</div><div class="t" style="left:221px;top:0px;width:80px;text-align:center;color:#00ff00;font-size:11px;">200 ps</div><div class="t" style="left:287px;top:0px;width:80px;text-align:center;color:#00ff00;font-size:11px;">250 ps</div><div class="t" style="left:353px;top:0px;width:80px;text-align:center;color:#00ff00;font-size:11px;">300 ps</div><div class="t" style="left:419px;top:0px;width:80px;text-align:center;color:#00ff00;font-size:11px;">350 ps</div><div class="t" style="left:485px;top:0px;width:80px;text-align:center;color:#00ff00;font-size:11px;">400 ps</div><div class="t" style="left:550px;top:0px;width:80px;text-align:center;color:#00ff00;font-size:11px;">450 ps</div><div class="t" style="left:616px;top:0px;width:80px;text-align:center;color:#00ff00;font-size:11px;">500 ps</div><div class="t" style="left:682px;top:0px;width:80px;text-align:center;color:#00ff00;font-size:11px;">550 ps</div><div class="t" style="left:748px;top:0px;width:80px;text-align:center;color:#00ff00;font-size:11px;">600 ps</div><div class="t" style="left:814px;top:0px;width:80px;text-align:center;color:#00ff00;font-size:11px;">650 ps</div></div>
<div class="a" style="left:806px;top:475px;width:2px;height:23px;background:#f4f4f4;"></div>
<div class="a" style="left:809px;top:498px;width:25px;height:17px;border:1px solid #ffd000;box-sizing:border-box;"></div>
<div class="t" style="left:811px;top:500px;color:#ffd000;font-size:11px;font-family:'Liberation Sans', sans-serif;">0 ps</div>
<div class="t" style="left:810px;top:92px;width:62px;overflow:hidden;color:#fff;font-size:11px;letter-spacing:-0.15px;">00000000...</div>
<div class="t" style="left:875px;top:92px;width:129px;overflow:hidden;color:#fff;font-size:11px;letter-spacing:-0.15px;">0000000000000000000...</div>
<div class="t" style="left:1007px;top:92px;width:129px;overflow:hidden;color:#fff;font-size:11px;letter-spacing:-0.15px;">0000000000000000000...</div>
<div class="t" style="left:1139px;top:92px;width:129px;overflow:hidden;color:#fff;font-size:11px;letter-spacing:-0.15px;">0000000000000000000...</div>
<div class="t" style="left:1271px;top:92px;width:128px;overflow:hidden;color:#fff;font-size:11px;letter-spacing:-0.15px;">0000000000000000000...</div>
<div class="t" style="left:1402px;top:92px;width:129px;overflow:hidden;color:#fff;font-size:11px;letter-spacing:-0.15px;">0000000000000000000...</div>
<div class="t" style="left:1534px;top:92px;width:129px;overflow:hidden;color:#fff;font-size:11px;letter-spacing:-0.15px;">0000000000000000000...</div>
<div class="t" style="left:1666px;top:92px;width:11px;overflow:hidden;color:#fff;font-size:11px;letter-spacing:-0.15px;">0</div>
<div class="t" style="left:810px;top:109px;width:62px;overflow:hidden;color:#fff;font-size:11px;letter-spacing:-0.15px;">00000001...</div>
<div class="t" style="left:875px;top:109px;width:129px;overflow:hidden;color:#fff;font-size:11px;letter-spacing:-0.15px;">0010101111100101000...</div>
<div class="t" style="left:1007px;top:109px;width:129px;overflow:hidden;color:#fff;font-size:11px;letter-spacing:-0.15px;">0001000000100101000...</div>
<div class="t" style="left:1139px;top:109px;width:129px;overflow:hidden;color:#fff;font-size:11px;letter-spacing:-0.15px;">1000110100101000000...</div>
<div class="t" style="left:810px;top:126px;width:867px;overflow:hidden;color:#fff;font-size:11px;letter-spacing:-0.15px;">100000</div>
<div class="t" style="left:810px;top:143px;width:62px;overflow:hidden;color:#fff;font-size:11px;letter-spacing:-0.15px;">01000</div>
<div class="t" style="left:875px;top:143px;width:129px;overflow:hidden;color:#fff;font-size:11px;letter-spacing:-0.15px;">11111</div>
<div class="t" style="left:1007px;top:143px;width:129px;overflow:hidden;color:#fff;font-size:11px;letter-spacing:-0.15px;">00001</div>
<div class="t" style="left:1139px;top:143px;width:129px;overflow:hidden;color:#fff;font-size:11px;letter-spacing:-0.15px;">01001</div>
<div class="t" style="left:810px;top:160px;width:62px;overflow:hidden;color:#fff;font-size:11px;letter-spacing:-0.15px;">01001</div>
<div class="t" style="left:875px;top:160px;width:261px;overflow:hidden;color:#fff;font-size:11px;letter-spacing:-0.15px;">00101</div>
<div class="t" style="left:1139px;top:160px;width:129px;overflow:hidden;color:#fff;font-size:11px;letter-spacing:-0.15px;">01000</div>
<div class="t" style="left:810px;top:177px;width:867px;overflow:hidden;color:#fff;font-size:11px;letter-spacing:-0.15px;">11111</div>
<div class="t" style="left:810px;top:194px;width:867px;overflow:hidden;color:#fff;font-size:11px;letter-spacing:-0.15px;">00010</div>
<div class="t" style="left:875px;top:228px;width:129px;overflow:hidden;color:#fff;font-size:11px;letter-spacing:-0.15px;">0000010011111111</div>
<div class="t" style="left:1007px;top:228px;width:129px;overflow:hidden;color:#fff;font-size:11px;letter-spacing:-0.15px;">0000000000000011</div>
<div class="t" style="left:1139px;top:228px;width:129px;overflow:hidden;color:#fff;font-size:11px;letter-spacing:-0.15px;">0000000000001111</div>
<div class="t" style="left:810px;top:245px;width:62px;overflow:hidden;color:#fff;font-size:11px;letter-spacing:-0.15px;">000000</div>
<div class="t" style="left:875px;top:245px;width:129px;overflow:hidden;color:#fff;font-size:11px;letter-spacing:-0.15px;">001010</div>
<div class="t" style="left:1007px;top:245px;width:129px;overflow:hidden;color:#fff;font-size:11px;letter-spacing:-0.15px;">000100</div>
<div class="t" style="left:1139px;top:245px;width:129px;overflow:hidden;color:#fff;font-size:11px;letter-spacing:-0.15px;">100011</div>
<div class="t" style="left:810px;top:364px;width:62px;overflow:hidden;color:#fff;font-size:11px;letter-spacing:-0.15px;">00000000...</div>
<div class="t" style="left:875px;top:364px;width:129px;overflow:hidden;color:#fff;font-size:11px;letter-spacing:-0.15px;">0000000000000000000...</div>
<div class="t" style="left:1007px;top:364px;width:129px;overflow:hidden;color:#fff;font-size:11px;letter-spacing:-0.15px;">0000000000000000000...</div>
<div class="t" style="left:1139px;top:364px;width:538px;overflow:hidden;color:#fff;font-size:11px;letter-spacing:-0.15px;">00000000000000000000000011111111</div>
<div class="t" style="left:810px;top:381px;width:62px;overflow:hidden;color:#fff;font-size:11px;letter-spacing:-0.15px;">00000000...</div>
<div class="t" style="left:875px;top:381px;width:129px;overflow:hidden;color:#fff;font-size:11px;letter-spacing:-0.15px;">0000000000000000000...</div>
<div class="t" style="left:1007px;top:381px;width:129px;overflow:hidden;color:#fff;font-size:11px;letter-spacing:-0.15px;">0000000000000000000...</div>
<div class="t" style="left:1139px;top:381px;width:538px;overflow:hidden;color:#fff;font-size:11px;letter-spacing:-0.15px;">00000000000000000000000011110000</div>
<div class="t" style="left:810px;top:398px;width:62px;overflow:hidden;color:#fff;font-size:11px;letter-spacing:-0.15px;">00000000...</div>
<div class="t" style="left:875px;top:398px;width:261px;overflow:hidden;color:#fff;font-size:11px;letter-spacing:-0.15px;">00000000000000000000000000000001</div>
<div class="t" style="left:1139px;top:398px;width:538px;overflow:hidden;color:#fff;font-size:11px;letter-spacing:-0.15px;">00000000000000000000000011111111</div>
<div class="a" style="left:0px;top:572px;width:1673px;height:17px;background:#f0f0f0;"></div>
<svg class="a" style="left:0px;top:573px" width="14" height="14" viewBox="0 0 14 14"><path d="M1 13V6a6 5 0 0 1 12 0v7h-3V7H4v6z" fill="#909090" stroke="#404040" stroke-width="0.8"/></svg>
<div class="t" style="left:17px;top:574px;color:#000;font-size:11px;font-family:'Liberation Sans', sans-serif;">Transcript</div>
<div class="a" style="left:72px;top:577px;width:886px;height:1px;background:#fff;"></div>
<div class="a" style="left:72px;top:578px;width:886px;height:1px;background:#6a6a6a;"></div>
<div class="a" style="left:72px;top:582px;width:886px;height:1px;background:#fff;"></div>
<div class="a" style="left:72px;top:583px;width:886px;height:1px;background:#6a6a6a;"></div>
<svg class="a" style="left:961px;top:576px" width="18" height="9" shape-rendering="crispEdges"><rect x="0" y="0" width="2" height="1" fill="#fff"/><rect x="0" y="1" width="1" height="1" fill="#fff"/><rect x="1" y="1" width="1" height="1" fill="#000"/><rect x="3" y="0" width="2" height="1" fill="#fff"/><rect x="3" y="1" width="1" height="1" fill="#fff"/><rect x="4" y="1" width="1" height="1" fill="#000"/><rect x="6" y="0" width="2" height="1" fill="#fff"/><rect x="6" y="1" width="1" height="1" fill="#fff"/><rect x="7" y="1" width="1" height="1" fill="#000"/><rect x="9" y="0" width="2" height="1" fill="#fff"/><rect x="9" y="1" width="1" height="1" fill="#fff"/><rect x="10" y="1" width="1" height="1" fill="#000"/><rect x="12" y="0" width="2" height="1" fill="#fff"/><rect x="12" y="1" width="1" height="1" fill="#fff"/><rect x="13" y="1" width="1" height="1" fill="#000"/><rect x="15" y="0" width="2" height="1" fill="#fff"/><rect x="15" y="1" width="1" height="1" fill="#fff"/><rect x="16" y="1" width="1" height="1" fill="#000"/><rect x="1" y="3" width="2" height="1" fill="#fff"/><rect x="1" y="4" width="1" height="1" fill="#fff"/><rect x="2" y="4" width="1" height="1" fill="#000"/><rect x="4" y="3" width="2" height="1" fill="#fff"/><rect x="4" y="4" width="1" height="1" fill="#fff"/><rect x="5" y="4" width="1" height="1" fill="#000"/><rect x="7" y="3" width="2" height="1" fill="#fff"/><rect x="7" y="4" width="1" height="1" fill="#fff"/><rect x="8" y="4" width="1" height="1" fill="#000"/><rect x="10" y="3" width="2" height="1" fill="#fff"/><rect x="10" y="4" width="1" height="1" fill="#fff"/><rect x="11" y="4" width="1" height="1" fill="#000"/><rect x="13" y="3" width="2" height="1" fill="#fff"/><rect x="13" y="4" width="1" height="1" fill="#fff"/><rect x="14" y="4" width="1" height="1" fill="#000"/><rect x="16" y="3" width="2" height="1" fill="#fff"/><rect x="16" y="4" width="1" height="1" fill="#fff"/><rect x="17" y="4" width="1" height="1" fill="#000"/><rect x="0" y="6" width="2" height="1" fill="#fff"/><rect x="0" y="7" width="1" height="1" fill="#fff"/><rect x="1" y="7" width="1" height="1" fill="#000"/><rect x="3" y="6" width="2" height="1" fill="#fff"/><rect x="3" y="7" width="1" height="1" fill="#fff"/><rect x="4" y="7" width="1" height="1" fill="#000"/><rect x="6" y="6" width="2" height="1" fill="#fff"/><rect x="6" y="7" width="1" height="1" fill="#fff"/><rect x="7" y="7" width="1" height="1" fill="#000"/><rect x="9" y="6" width="2" height="1" fill="#fff"/><rect x="9" y="7" width="1" height="1" fill="#fff"/><rect x="10" y="7" width="1" height="1" fill="#000"/><rect x="12" y="6" width="2" height="1" fill="#fff"/><rect x="12" y="7" width="1" height="1" fill="#fff"/><rect x="13" y="7" width="1" height="1" fill="#000"/><rect x="15" y="6" width="2" height="1" fill="#fff"/><rect x="15" y="7" width="1" height="1" fill="#fff"/><rect x="16" y="7" width="1" height="1" fill="#000"/></svg>
<div class="a" style="left:981px;top:577px;width:692px;height:1px;background:#fff;"></div>
<div class="a" style="left:981px;top:578px;width:692px;height:1px;background:#6a6a6a;"></div>
<div class="a" style="left:981px;top:582px;width:692px;height:1px;background:#fff;"></div>
<div class="a" style="left:981px;top:583px;width:692px;height:1px;background:#6a6a6a;"></div>
<div class="a" style="left:0px;top:589px;width:1673px;height:2px;background:#000;"></div>
<div class="a" style="left:0px;top:591px;width:1673px;height:245px;background:#fff;"></div>
<div class="a" style="left:0px;top:589px;width:1px;height:247px;background:#000;"></div>
<div class="a" style="left:1px;top:591px;width:1px;height:245px;background:#808080;"></div>
<div class="t" style="left:3px;top:594px;color:#0000f0;font-size:11.8px;font-family:'Liberation Mono', monospace;letter-spacing:-0.08px;"># Loading work.ALU32bit(fast)</div>
<div class="t" style="left:3px;top:609px;color:#0000f0;font-size:11.8px;font-family:'Liberation Mono', monospace;letter-spacing:-0.08px;"># Loading work.read_data_memory(fast)</div>
<div class="t" style="left:3px;top:624px;color:#0000f0;font-size:11.8px;font-family:'Liberation Mono', monospace;letter-spacing:-0.08px;"># Loading work.read_registers(fast)</div>
<div class="t" style="left:3px;top:638px;color:#000080;font-size:11px;font-family:'Liberation Sans', sans-serif;letter-spacing:-0.2px;">VSIM 4&gt;</div>
<div class="t" style="left:48px;top:639px;color:#000;font-size:12px;font-family:'Liberation Mono', monospace;letter-spacing:-0.2px;">run</div>
<div class="t" style="left:3px;top:654px;color:#0000f0;font-size:11.8px;font-family:'Liberation Mono', monospace;letter-spacing:-0.08px;"># opcode: 000000, Rs content: 00000000000000000000000011111111, rt content: 00000000000000000000000011110000, signExtendImm = xxxxxxxxxxxxxxxxxxxxxxxxxxxxxxxx, result: 00000000000000000000000111101111</div>
<div class="t" style="left:3px;top:669px;color:#0000f0;font-size:11.8px;font-family:'Liberation Mono', monospace;">#</div>
<div class="t" style="left:3px;top:684px;color:#0000f0;font-size:11.8px;font-family:'Liberation Mono', monospace;letter-spacing:-0.08px;"># opcode: 001010, Rs content: 00000000000000000000000111101111, rt content: 00000000000000000000000000000001, signExtendImm = 00000000000000000000010011111111, result: 00000000000000000000000000000001</div>
<div class="t" style="left:3px;top:699px;color:#0000f0;font-size:11.8px;font-family:'Liberation Mono', monospace;">#</div>
<div class="t" style="left:3px;top:714px;color:#0000f0;font-size:11.8px;font-family:'Liberation Mono', monospace;letter-spacing:-0.08px;"># opcode: 000100, Rs content: 00000000000000000000000000000001, rt content: 00000000000000000000000000000001, signExtendImm = 00000000000000000000000000000011, result: 00000000000000000000000000000000</div>
<div class="t" style="left:3px;top:729px;color:#0000f0;font-size:11.8px;font-family:'Liberation Mono', monospace;">#</div>
<div class="t" style="left:3px;top:744px;color:#0000f0;font-size:11.8px;font-family:'Liberation Mono', monospace;letter-spacing:-0.08px;"># opcode: 100011, Rs content: 00000000000000000000000011110000, rt content: 00000000000000000000000011111111, signExtendImm = 00000000000000000000000000001111, result: 00000000000000000000000011111111</div>
<div class="t" style="left:3px;top:759px;color:#0000f0;font-size:11.8px;font-family:'Liberation Mono', monospace;">#</div>
<div class="t" style="left:3px;top:774px;color:#0000f0;font-size:11.8px;font-family:'Liberation Mono', monospace;letter-spacing:-0.08px;"># opcode: xxxxxx, Rs content: 00000000000000000000000011110000, rt content: 00000000000000000000000011111111, signExtendImm = xxxxxxxxxxxxxxxxxxxxxxxxxxxxxxxx, result: 00000000000000000000000011111111</div>
<div class="t" style="left:3px;top:789px;color:#0000f0;font-size:11.8px;font-family:'Liberation Mono', monospace;">#</div>
<div class="t" style="left:3px;top:818px;color:#000080;font-size:11px;font-family:'Liberation Sans', sans-serif;letter-spacing:-0.2px;">VSIM 5&gt;</div>
</body></html>
